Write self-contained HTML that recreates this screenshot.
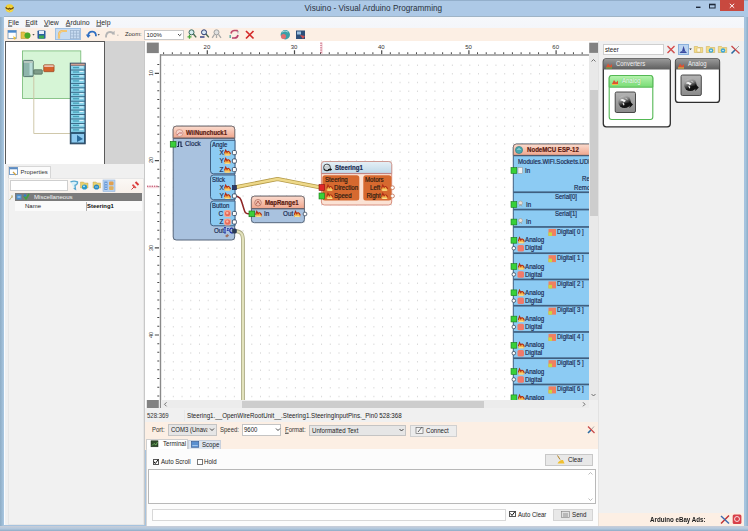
<!DOCTYPE html><html><head><meta charset="utf-8"><style>
*{box-sizing:border-box;margin:0;padding:0}
html,body{width:748px;height:531px;overflow:hidden;background:#a6c3df;font-family:"Liberation Sans",sans-serif;font-size:6.2px;color:#1a1a1a;line-height:1}
.a{position:absolute}
.t{position:absolute;white-space:nowrap;line-height:1}
.cv .t{-webkit-text-stroke:0.18px currentColor}
.b{font-weight:bold}
svg{position:absolute;left:0;top:0;overflow:visible}
u{text-decoration-thickness:0.5px;text-underline-offset:0.8px}
</style></head><body><div id="wrap" style="position:absolute;left:0;top:0;width:748px;height:531px;overflow:hidden;filter:blur(0.35px)">
<div class="a" style="left:0px;top:0px;width:748px;height:17px;background:#adc9e6;border-top:1px solid #93afcb"></div>
<div class="a" style="left:0px;top:17px;width:3.5px;height:514px;background:linear-gradient(90deg,#8eadc6,#aac8e2)"></div>
<div class="a" style="left:744.5px;top:17px;width:3.5px;height:514px;background:linear-gradient(90deg,#aac8e2,#8eadc6)"></div>
<div class="t" style="left:304.5px;top:9px;transform:translateY(-50%);font-size:8.2px;color:#2a3340">Visuino - Visual Arduino Programming</div>
<svg width="748" height="17"><circle cx="9.6" cy="8.3" r="4.1" fill="#f2d030"/><ellipse cx="9.6" cy="9.5" rx="3.2" ry="2.2" fill="#f8e060" opacity="0.6"/><path d="M5.8 7 q1 3 3.8 1.2 q2.8 1.8 3.8 -1.2" stroke="#6a4a10" stroke-width="1.1" fill="none"/><path d="M7.5 8.5 l2.1 1.5 l2.1 -1.5" stroke="#6a4a10" stroke-width="0.8" fill="none"/></svg>
<div class="a" style="left:720px;top:0px;width:24px;height:11px;background:#c8493f"></div>
<svg width="748" height="17"><path d="M729.8 3.8 L734.2 7.8 M734.2 3.8 L729.8 7.8" stroke="#fff" stroke-width="1"/><rect x="696" y="6.6" width="4.5" height="1.4" fill="#1e2a3a"/><rect x="709.5" y="4.2" width="5.6" height="3.8" fill="none" stroke="#1e2a3a" stroke-width="1"/><rect x="709.5" y="4" width="5.6" height="1.3" fill="#1e2a3a"/></svg>
<div class="a" style="left:4px;top:15.6px;width:740px;height:0.9px;background:#9fb4c6"></div>
<div class="a" style="left:4px;top:16.5px;width:740px;height:11.5px;background:linear-gradient(#f6f8fb,#f4f6fa)"></div>
<div class="t" style="left:8px;top:22.9px;transform:translateY(-50%);font-size:6.9px;color:#2a2a2a"><u>F</u>ile</div>
<div class="t" style="left:25.5px;top:22.9px;transform:translateY(-50%);font-size:6.9px;color:#2a2a2a"><u>E</u>dit</div>
<div class="t" style="left:44px;top:22.9px;transform:translateY(-50%);font-size:6.9px;color:#2a2a2a"><u>V</u>iew</div>
<div class="t" style="left:65.8px;top:22.9px;transform:translateY(-50%);font-size:6.9px;color:#2a2a2a"><u>A</u>rduino</div>
<div class="t" style="left:96.3px;top:22.9px;transform:translateY(-50%);font-size:6.9px;color:#2a2a2a"><u>H</u>elp</div>
<div class="a" style="left:4px;top:28px;width:740px;height:13px;background:#fcefe4"></div>
<div class="a" style="left:55.4px;top:28.3px;width:26px;height:11.3px;background:#c7dbf1;border:1px solid #9fc0e4"></div>
<div class="a" style="left:144.2px;top:29.6px;width:39.5px;height:10.6px;background:#fff;border:1px solid #c9c9c9"></div>
<div class="t" style="left:125px;top:35px;transform:translateY(-50%);font-size:5.9px;color:#333">Zoom:</div>
<div class="t" style="left:146.5px;top:35px;transform:translateY(-50%);font-size:6px;color:#222">100%</div>
<svg width="748" height="60">
<!-- new -->
<rect x="8" y="30.5" width="8.2" height="8" fill="#fff" stroke="#6f8fb0" stroke-width="0.8"/>
<rect x="8" y="30.5" width="8.2" height="2.2" fill="#4a8ad0"/>
<path d="M13.5 35.5 l1 1.5 l1.8 0.2 l-1.3 1.2 l0.4 1.6 l-1.9 -0.9 z" fill="#f0c030"/>
<!-- open -->
<path d="M21 32 h3.5 l1 1 h3 v5.5 h-7.5 z" fill="#e3c24a" stroke="#b09020" stroke-width="0.5"/>
<circle cx="27.5" cy="35.5" r="3" fill="#4aa82a"/>
<path d="M32.4 34.3 h2.2 l-1.1 1.3 z" fill="#222"/>
<!-- save -->
<rect x="37.5" y="30.5" width="8" height="8.3" rx="0.8" fill="#2d5f9e"/>
<rect x="39" y="31" width="5" height="3" fill="#e8eef8"/>
<rect x="39" y="35.5" width="5" height="3" fill="#3eaa52"/>
<!-- toggle icons -->
<path d="M59 38.5 v-3.5 q0 -4 4 -4 h4" stroke="#eeb860" stroke-width="2.2" fill="none"/>
<path d="M59 38.5 v-3.5 q0 -4 4 -4 h4" stroke="#f7d890" stroke-width="0.8" fill="none"/>
<g stroke="#98b0cc" stroke-width="0.7" fill="none"><rect x="70.5" y="30.5" width="9" height="8.2"/><path d="M73.5 30.5 v8.2 M76.5 30.5 v8.2 M70.5 33.2 h9 M70.5 36 h9"/></g>
<!-- undo -->
<path d="M88 36.5 q0 -5 4.5 -4.8 q3.5 0.3 3.5 4.5" stroke="#2f6fc2" stroke-width="1.8" fill="none"/>
<path d="M85.8 34.5 l2.4 3.5 l2.4 -3 z" fill="#2f6fc2"/>
<path d="M97.6 34.3 h2.2 l-1.1 1.3 z" fill="#222"/>
<!-- redo -->
<path d="M106 37.5 q0 -5.5 4 -5.5 q3 0 3.5 2.5" stroke="#b5b5b5" stroke-width="1.8" fill="none"/>
<path d="M112 33 l2.6 -2.2 v4.2 z" fill="#b5b5b5"/>
<rect x="117" y="34.8" width="1.6" height="0.6" fill="#999"/>
<!-- combo chevron -->
<path d="M178 34 l1.7 1.7 l1.7 -1.7" stroke="#333" stroke-width="0.9" fill="none"/>
<!-- zoom in -->
<path d="M193.2 33.8 l3 3.6" stroke="#4a6a50" stroke-width="1.4"/>
<circle cx="191.5" cy="32.3" r="2.5" fill="#d8ecf0" stroke="#3a6a60" stroke-width="1"/>
<path d="M187.5 36.8 h4 M189.5 34.8 v4" stroke="#48a838" stroke-width="1.3"/>
<!-- zoom out -->
<path d="M205.8 33.8 l3 3.6" stroke="#4a6a50" stroke-width="1.4"/>
<circle cx="204" cy="32.3" r="2.5" fill="#d8e8f4" stroke="#2a3a70" stroke-width="1"/>
<path d="M200 37 h4.5" stroke="#2a3a80" stroke-width="1.4"/>
<!-- zoom reset -->
<circle cx="216.5" cy="32.3" r="2.5" fill="#e0e0e0" stroke="#a0a0a0" stroke-width="1"/>
<path d="M214.5 34.3 l-2.3 3.5 M218.5 34.3 l2.5 3.5 M216.5 35 v3" stroke="#a8a8a8" stroke-width="1.3"/>
<!-- refresh -->
<path d="M231 33.5 q0.5 -3 3.5 -3 h2.5 l1 1.5" stroke="#c04a6a" stroke-width="1.6" fill="none"/>
<path d="M238 35 q-0.5 3 -3.5 3 h-2.5" stroke="#b8406a" stroke-width="1.6" fill="none"/>
<path d="M230.2 35 v3" stroke="#58a8a0" stroke-width="1.4"/>
<path d="M238 31 v2.5" stroke="#a8c8c8" stroke-width="1"/>
<!-- red x -->
<path d="M246 31 l7.5 7.5 M253.5 31 l-7.5 7.5" stroke="#d42a2a" stroke-width="1.7"/>
<!-- teal -->
<circle cx="285.3" cy="34.8" r="4.7" fill="#3aa0a8"/>
<circle cx="283.5" cy="36.5" r="2.5" fill="#e07070"/>
<path d="M282 32 q3 -2 6 0" stroke="#b8e0e8" stroke-width="0.8" fill="none"/>
<!-- dark blue -->
<rect x="296" y="30.5" width="9" height="8.5" fill="#2d4f78"/>
<rect x="297" y="31.5" width="4" height="3" fill="#9ac0e0"/>
<path d="M300 35 l3 4 l2 -3" fill="#d05050"/>
</svg>
<div class="a" style="left:4px;top:41px;width:140px;height:484px;background:#f0f0f0"></div>
<div class="a" style="left:4.5px;top:41px;width:100.5px;height:123px;background:#fff;border:1px solid #5a5a5a;border-bottom:none"></div>
<div class="a" style="left:105px;top:41px;width:39.5px;height:123px;background:#d3d3d3"></div>
<div class="a" style="left:143.5px;top:41px;width:1px;height:484px;background:#c8c8c8"></div>
<svg width="748" height="200">
<rect x="22.5" y="50.9" width="58.3" height="47.5" fill="#d6f5d6" stroke="#72b872" stroke-width="0.8"/>
<path d="M33.8 76 V133.5 H70.5" stroke="#cbc2a2" stroke-width="0.9" fill="none"/>
<rect x="23.3" y="60.4" width="9.9" height="16.2" rx="1" fill="#8fb5ac" stroke="#3f5f5c" stroke-width="0.8"/>
<rect x="29.5" y="62" width="3" height="13" fill="#b8dcd8"/>
<rect x="23.8" y="61" width="9" height="2" fill="#b8c8c0"/>
<rect x="33.8" y="69.7" width="8.5" height="4.5" rx="0.8" fill="#7e9c8a" stroke="#3f5a4a" stroke-width="0.6"/>
<rect x="43.7" y="64.8" width="10.4" height="6.9" rx="0.8" fill="#d4622c" stroke="#8a3a1a" stroke-width="0.6"/>
<rect x="44.2" y="65.2" width="9.4" height="1.8" fill="#e8c0b0"/>
<rect x="70.3" y="63.2" width="14.9" height="80.6" fill="#2f5a78" stroke="#27445e" stroke-width="1"/>
<rect x="70.8" y="63.6" width="14" height="2" fill="#d0a090"/>
<rect x="71" y="66.00" width="13.5" height="3.6" fill="#86d2ea"/><rect x="73" y="67.00" width="6" height="1.2" fill="#2a8aa0" opacity="0.7"/><rect x="79.5" y="66.50" width="4" height="1" fill="#e8f8ff"/><rect x="71" y="70.45" width="13.5" height="3.6" fill="#86d2ea"/><rect x="73" y="71.45" width="6" height="1.2" fill="#2a8aa0" opacity="0.7"/><rect x="79.5" y="70.95" width="4" height="1" fill="#e8f8ff"/><rect x="71" y="74.90" width="13.5" height="3.6" fill="#86d2ea"/><rect x="73" y="75.90" width="6" height="1.2" fill="#2a8aa0" opacity="0.7"/><rect x="79.5" y="75.40" width="4" height="1" fill="#e8f8ff"/><rect x="71" y="79.35" width="13.5" height="3.6" fill="#86d2ea"/><rect x="73" y="80.35" width="6" height="1.2" fill="#2a8aa0" opacity="0.7"/><rect x="79.5" y="79.85" width="4" height="1" fill="#e8f8ff"/><rect x="71" y="83.80" width="13.5" height="3.6" fill="#86d2ea"/><rect x="73" y="84.80" width="6" height="1.2" fill="#2a8aa0" opacity="0.7"/><rect x="79.5" y="84.30" width="4" height="1" fill="#e8f8ff"/><rect x="71" y="88.25" width="13.5" height="3.6" fill="#86d2ea"/><rect x="73" y="89.25" width="6" height="1.2" fill="#2a8aa0" opacity="0.7"/><rect x="79.5" y="88.75" width="4" height="1" fill="#e8f8ff"/><rect x="71" y="92.70" width="13.5" height="3.6" fill="#86d2ea"/><rect x="73" y="93.70" width="6" height="1.2" fill="#2a8aa0" opacity="0.7"/><rect x="79.5" y="93.20" width="4" height="1" fill="#e8f8ff"/><rect x="71" y="97.15" width="13.5" height="3.6" fill="#86d2ea"/><rect x="73" y="98.15" width="6" height="1.2" fill="#2a8aa0" opacity="0.7"/><rect x="79.5" y="97.65" width="4" height="1" fill="#e8f8ff"/><rect x="71" y="101.60" width="13.5" height="3.6" fill="#86d2ea"/><rect x="73" y="102.60" width="6" height="1.2" fill="#2a8aa0" opacity="0.7"/><rect x="79.5" y="102.10" width="4" height="1" fill="#e8f8ff"/><rect x="71" y="106.05" width="13.5" height="3.6" fill="#86d2ea"/><rect x="73" y="107.05" width="6" height="1.2" fill="#2a8aa0" opacity="0.7"/><rect x="79.5" y="106.55" width="4" height="1" fill="#e8f8ff"/><rect x="71" y="110.50" width="13.5" height="3.6" fill="#86d2ea"/><rect x="73" y="111.50" width="6" height="1.2" fill="#2a8aa0" opacity="0.7"/><rect x="79.5" y="111.00" width="4" height="1" fill="#e8f8ff"/><rect x="71" y="114.95" width="13.5" height="3.6" fill="#86d2ea"/><rect x="73" y="115.95" width="6" height="1.2" fill="#2a8aa0" opacity="0.7"/><rect x="79.5" y="115.45" width="4" height="1" fill="#e8f8ff"/><rect x="71" y="119.40" width="13.5" height="3.6" fill="#86d2ea"/><rect x="73" y="120.40" width="6" height="1.2" fill="#2a8aa0" opacity="0.7"/><rect x="79.5" y="119.90" width="4" height="1" fill="#e8f8ff"/><rect x="71" y="123.85" width="13.5" height="3.6" fill="#86d2ea"/><rect x="73" y="124.85" width="6" height="1.2" fill="#2a8aa0" opacity="0.7"/><rect x="79.5" y="124.35" width="4" height="1" fill="#e8f8ff"/><rect x="71" y="128.30" width="13.5" height="3.6" fill="#86d2ea"/><rect x="73" y="129.30" width="6" height="1.2" fill="#2a8aa0" opacity="0.7"/><rect x="79.5" y="128.80" width="4" height="1" fill="#e8f8ff"/>
<rect x="71.5" y="134" width="12.5" height="8.5" fill="#8ccaf0"/>
<path d="M77 135 l6 4 l-6 3 z" fill="#2a6a9a"/>
</svg>
<div class="a" style="left:4px;top:41px;width:1.2px;height:484px;background:#fafcff"></div>
<div class="a" style="left:7.5px;top:177.5px;width:136px;height:347px;background:#f1f1f1;border:1px solid #e6e6e6"></div>
<div class="a" style="left:8px;top:166px;width:43px;height:12px;background:#fbfbfb;border:1px solid #d6d6d6;border-bottom:none"></div>
<div class="t" style="left:20.5px;top:172px;transform:translateY(-50%);font-size:6px;color:#333">Properties</div>
<div class="a" style="left:8.5px;top:178.5px;width:134.5px;height:14px;background:linear-gradient(#fbf8f5,#f7f0ea)"></div>
<div class="a" style="left:9.6px;top:180px;width:58px;height:11px;background:#fff;border:1px solid #cfcfcf"></div>
<div class="a" style="left:15px;top:193px;width:127px;height:8.2px;background:#7b7b7b"></div>
<div class="t" style="left:34px;top:197.2px;transform:translateY(-50%);font-size:6.1px;color:#f4f4f4">Miscellaneous</div>
<div class="a" style="left:15px;top:201.2px;width:127px;height:9.5px;background:#fafafa"></div>
<div class="a" style="left:85.5px;top:201.5px;width:0.8px;height:9px;background:#b0b0b0"></div>
<div class="t" style="left:25px;top:206px;transform:translateY(-50%);font-size:6px;color:#222">Name</div>
<div class="t" style="left:87px;top:207px;transform:translateY(-50%);font-size:5.9px;color:#111;font-weight:bold">Steering1</div>
<svg width="748" height="220">
<rect x="9.5" y="167.5" width="8" height="7" fill="#fff" stroke="#5a8ac0" stroke-width="0.8"/>
<rect x="9.5" y="167.5" width="8" height="1.8" fill="#5a8ac0"/>
<path d="M13 172 l3 3" stroke="#d0a040" stroke-width="1.2"/>
<path d="M70.5 181.8 q3.5 -1.5 7 0 q0.5 2.5 -2.5 3.5 l0.5 4 l-1.8 -1" stroke="#58a8d0" stroke-width="1.3" fill="#d8f0f8"/>
<path d="M80.5 182 h3 l1 1 h3.5 v5 h-7.5 z" fill="#e8d070" stroke="#c0a040" stroke-width="0.4"/><circle cx="84.5" cy="187" r="2.6" fill="#2a98c8"/><circle cx="84" cy="186.3" r="0.9" fill="#c0f0ff"/>
<path d="M93 182 h3 l1 1 h3.5 v5 h-7.5 z" fill="#e8d070" stroke="#c0a040" stroke-width="0.4"/><circle cx="96.5" cy="187" r="2.6" fill="#2a88c0"/><path d="M95 187 h3" stroke="#c0f0ff" stroke-width="0.7"/>
<rect x="103" y="180" width="12" height="11.5" fill="#b8d2f0" stroke="#90b4e0" stroke-width="0.6"/>
<rect x="104.3" y="181.5" width="3.2" height="8.5" fill="#6a9ad8"/><path d="M105 183.5 h2 M105 186 h2 M105 188.5 h2" stroke="#e0f0ff" stroke-width="0.6"/>
<rect x="109" y="181.5" width="4.5" height="3.8" rx="1" fill="#e0a050"/><rect x="109" y="186.3" width="4.5" height="3.8" rx="1" fill="#e0b060"/>
<path d="M131.5 189.5 l3 -3" stroke="#c03030" stroke-width="0.9"/><path d="M133 184 l3.5 3.5 l-1.5 1 l-3 -3 z" fill="#e04848"/><path d="M135.5 182 l3 3" stroke="#d83a3a" stroke-width="2"/>
<path d="M9.5 200 l3 -4 M12 195 v3" stroke="#c0b070" stroke-width="0.9"/>
<rect x="16.5" y="194.5" width="5" height="5" fill="#4a90d0"/><path d="M17.5 197 h3" stroke="#fff" stroke-width="0.7"/>
<path d="M24 196 l2 3 l3 -5" stroke="#40a040" stroke-width="1.6" fill="none"/><circle cx="25" cy="195.5" r="1.3" fill="#3080c0"/>
</svg>
<div class="a" style="left:144.5px;top:41px;width:454px;height:367px;background:#fff"></div>
<svg width="748" height="531"><path d="M164.10 64.40h1v1.5h-1zM164.10 73.12h1v1.5h-1zM164.10 81.84h1v1.5h-1zM164.10 90.56h1v1.5h-1zM164.10 99.28h1v1.5h-1zM164.10 108.00h1v1.5h-1zM164.10 116.72h1v1.5h-1zM164.10 125.44h1v1.5h-1zM164.10 134.16h1v1.5h-1zM164.10 142.88h1v1.5h-1zM164.10 151.60h1v1.5h-1zM164.10 160.32h1v1.5h-1zM164.10 169.04h1v1.5h-1zM164.10 177.76h1v1.5h-1zM164.10 186.48h1v1.5h-1zM164.10 195.20h1v1.5h-1zM164.10 203.92h1v1.5h-1zM164.10 212.64h1v1.5h-1zM164.10 221.36h1v1.5h-1zM164.10 230.08h1v1.5h-1zM164.10 238.80h1v1.5h-1zM164.10 247.52h1v1.5h-1zM164.10 256.24h1v1.5h-1zM164.10 264.96h1v1.5h-1zM164.10 273.68h1v1.5h-1zM164.10 282.40h1v1.5h-1zM164.10 291.12h1v1.5h-1zM164.10 299.84h1v1.5h-1zM164.10 308.56h1v1.5h-1zM164.10 317.28h1v1.5h-1zM164.10 326.00h1v1.5h-1zM164.10 334.72h1v1.5h-1zM164.10 343.44h1v1.5h-1zM164.10 352.16h1v1.5h-1zM164.10 360.88h1v1.5h-1zM164.10 369.60h1v1.5h-1zM164.10 378.32h1v1.5h-1zM164.10 387.04h1v1.5h-1zM164.10 395.76h1v1.5h-1zM172.82 64.40h1v1.5h-1zM172.82 73.12h1v1.5h-1zM172.82 81.84h1v1.5h-1zM172.82 90.56h1v1.5h-1zM172.82 99.28h1v1.5h-1zM172.82 108.00h1v1.5h-1zM172.82 116.72h1v1.5h-1zM172.82 125.44h1v1.5h-1zM172.82 134.16h1v1.5h-1zM172.82 142.88h1v1.5h-1zM172.82 151.60h1v1.5h-1zM172.82 160.32h1v1.5h-1zM172.82 169.04h1v1.5h-1zM172.82 177.76h1v1.5h-1zM172.82 186.48h1v1.5h-1zM172.82 195.20h1v1.5h-1zM172.82 203.92h1v1.5h-1zM172.82 212.64h1v1.5h-1zM172.82 221.36h1v1.5h-1zM172.82 230.08h1v1.5h-1zM172.82 238.80h1v1.5h-1zM172.82 247.52h1v1.5h-1zM172.82 256.24h1v1.5h-1zM172.82 264.96h1v1.5h-1zM172.82 273.68h1v1.5h-1zM172.82 282.40h1v1.5h-1zM172.82 291.12h1v1.5h-1zM172.82 299.84h1v1.5h-1zM172.82 308.56h1v1.5h-1zM172.82 317.28h1v1.5h-1zM172.82 326.00h1v1.5h-1zM172.82 334.72h1v1.5h-1zM172.82 343.44h1v1.5h-1zM172.82 352.16h1v1.5h-1zM172.82 360.88h1v1.5h-1zM172.82 369.60h1v1.5h-1zM172.82 378.32h1v1.5h-1zM172.82 387.04h1v1.5h-1zM172.82 395.76h1v1.5h-1zM181.54 64.40h1v1.5h-1zM181.54 73.12h1v1.5h-1zM181.54 81.84h1v1.5h-1zM181.54 90.56h1v1.5h-1zM181.54 99.28h1v1.5h-1zM181.54 108.00h1v1.5h-1zM181.54 116.72h1v1.5h-1zM181.54 125.44h1v1.5h-1zM181.54 134.16h1v1.5h-1zM181.54 142.88h1v1.5h-1zM181.54 151.60h1v1.5h-1zM181.54 160.32h1v1.5h-1zM181.54 169.04h1v1.5h-1zM181.54 177.76h1v1.5h-1zM181.54 186.48h1v1.5h-1zM181.54 195.20h1v1.5h-1zM181.54 203.92h1v1.5h-1zM181.54 212.64h1v1.5h-1zM181.54 221.36h1v1.5h-1zM181.54 230.08h1v1.5h-1zM181.54 238.80h1v1.5h-1zM181.54 247.52h1v1.5h-1zM181.54 256.24h1v1.5h-1zM181.54 264.96h1v1.5h-1zM181.54 273.68h1v1.5h-1zM181.54 282.40h1v1.5h-1zM181.54 291.12h1v1.5h-1zM181.54 299.84h1v1.5h-1zM181.54 308.56h1v1.5h-1zM181.54 317.28h1v1.5h-1zM181.54 326.00h1v1.5h-1zM181.54 334.72h1v1.5h-1zM181.54 343.44h1v1.5h-1zM181.54 352.16h1v1.5h-1zM181.54 360.88h1v1.5h-1zM181.54 369.60h1v1.5h-1zM181.54 378.32h1v1.5h-1zM181.54 387.04h1v1.5h-1zM181.54 395.76h1v1.5h-1zM190.26 64.40h1v1.5h-1zM190.26 73.12h1v1.5h-1zM190.26 81.84h1v1.5h-1zM190.26 90.56h1v1.5h-1zM190.26 99.28h1v1.5h-1zM190.26 108.00h1v1.5h-1zM190.26 116.72h1v1.5h-1zM190.26 125.44h1v1.5h-1zM190.26 134.16h1v1.5h-1zM190.26 142.88h1v1.5h-1zM190.26 151.60h1v1.5h-1zM190.26 160.32h1v1.5h-1zM190.26 169.04h1v1.5h-1zM190.26 177.76h1v1.5h-1zM190.26 186.48h1v1.5h-1zM190.26 195.20h1v1.5h-1zM190.26 203.92h1v1.5h-1zM190.26 212.64h1v1.5h-1zM190.26 221.36h1v1.5h-1zM190.26 230.08h1v1.5h-1zM190.26 238.80h1v1.5h-1zM190.26 247.52h1v1.5h-1zM190.26 256.24h1v1.5h-1zM190.26 264.96h1v1.5h-1zM190.26 273.68h1v1.5h-1zM190.26 282.40h1v1.5h-1zM190.26 291.12h1v1.5h-1zM190.26 299.84h1v1.5h-1zM190.26 308.56h1v1.5h-1zM190.26 317.28h1v1.5h-1zM190.26 326.00h1v1.5h-1zM190.26 334.72h1v1.5h-1zM190.26 343.44h1v1.5h-1zM190.26 352.16h1v1.5h-1zM190.26 360.88h1v1.5h-1zM190.26 369.60h1v1.5h-1zM190.26 378.32h1v1.5h-1zM190.26 387.04h1v1.5h-1zM190.26 395.76h1v1.5h-1zM198.98 64.40h1v1.5h-1zM198.98 73.12h1v1.5h-1zM198.98 81.84h1v1.5h-1zM198.98 90.56h1v1.5h-1zM198.98 99.28h1v1.5h-1zM198.98 108.00h1v1.5h-1zM198.98 116.72h1v1.5h-1zM198.98 125.44h1v1.5h-1zM198.98 134.16h1v1.5h-1zM198.98 142.88h1v1.5h-1zM198.98 151.60h1v1.5h-1zM198.98 160.32h1v1.5h-1zM198.98 169.04h1v1.5h-1zM198.98 177.76h1v1.5h-1zM198.98 186.48h1v1.5h-1zM198.98 195.20h1v1.5h-1zM198.98 203.92h1v1.5h-1zM198.98 212.64h1v1.5h-1zM198.98 221.36h1v1.5h-1zM198.98 230.08h1v1.5h-1zM198.98 238.80h1v1.5h-1zM198.98 247.52h1v1.5h-1zM198.98 256.24h1v1.5h-1zM198.98 264.96h1v1.5h-1zM198.98 273.68h1v1.5h-1zM198.98 282.40h1v1.5h-1zM198.98 291.12h1v1.5h-1zM198.98 299.84h1v1.5h-1zM198.98 308.56h1v1.5h-1zM198.98 317.28h1v1.5h-1zM198.98 326.00h1v1.5h-1zM198.98 334.72h1v1.5h-1zM198.98 343.44h1v1.5h-1zM198.98 352.16h1v1.5h-1zM198.98 360.88h1v1.5h-1zM198.98 369.60h1v1.5h-1zM198.98 378.32h1v1.5h-1zM198.98 387.04h1v1.5h-1zM198.98 395.76h1v1.5h-1zM207.70 64.40h1v1.5h-1zM207.70 73.12h1v1.5h-1zM207.70 81.84h1v1.5h-1zM207.70 90.56h1v1.5h-1zM207.70 99.28h1v1.5h-1zM207.70 108.00h1v1.5h-1zM207.70 116.72h1v1.5h-1zM207.70 125.44h1v1.5h-1zM207.70 134.16h1v1.5h-1zM207.70 142.88h1v1.5h-1zM207.70 151.60h1v1.5h-1zM207.70 160.32h1v1.5h-1zM207.70 169.04h1v1.5h-1zM207.70 177.76h1v1.5h-1zM207.70 186.48h1v1.5h-1zM207.70 195.20h1v1.5h-1zM207.70 203.92h1v1.5h-1zM207.70 212.64h1v1.5h-1zM207.70 221.36h1v1.5h-1zM207.70 230.08h1v1.5h-1zM207.70 238.80h1v1.5h-1zM207.70 247.52h1v1.5h-1zM207.70 256.24h1v1.5h-1zM207.70 264.96h1v1.5h-1zM207.70 273.68h1v1.5h-1zM207.70 282.40h1v1.5h-1zM207.70 291.12h1v1.5h-1zM207.70 299.84h1v1.5h-1zM207.70 308.56h1v1.5h-1zM207.70 317.28h1v1.5h-1zM207.70 326.00h1v1.5h-1zM207.70 334.72h1v1.5h-1zM207.70 343.44h1v1.5h-1zM207.70 352.16h1v1.5h-1zM207.70 360.88h1v1.5h-1zM207.70 369.60h1v1.5h-1zM207.70 378.32h1v1.5h-1zM207.70 387.04h1v1.5h-1zM207.70 395.76h1v1.5h-1zM216.42 64.40h1v1.5h-1zM216.42 73.12h1v1.5h-1zM216.42 81.84h1v1.5h-1zM216.42 90.56h1v1.5h-1zM216.42 99.28h1v1.5h-1zM216.42 108.00h1v1.5h-1zM216.42 116.72h1v1.5h-1zM216.42 125.44h1v1.5h-1zM216.42 134.16h1v1.5h-1zM216.42 142.88h1v1.5h-1zM216.42 151.60h1v1.5h-1zM216.42 160.32h1v1.5h-1zM216.42 169.04h1v1.5h-1zM216.42 177.76h1v1.5h-1zM216.42 186.48h1v1.5h-1zM216.42 195.20h1v1.5h-1zM216.42 203.92h1v1.5h-1zM216.42 212.64h1v1.5h-1zM216.42 221.36h1v1.5h-1zM216.42 230.08h1v1.5h-1zM216.42 238.80h1v1.5h-1zM216.42 247.52h1v1.5h-1zM216.42 256.24h1v1.5h-1zM216.42 264.96h1v1.5h-1zM216.42 273.68h1v1.5h-1zM216.42 282.40h1v1.5h-1zM216.42 291.12h1v1.5h-1zM216.42 299.84h1v1.5h-1zM216.42 308.56h1v1.5h-1zM216.42 317.28h1v1.5h-1zM216.42 326.00h1v1.5h-1zM216.42 334.72h1v1.5h-1zM216.42 343.44h1v1.5h-1zM216.42 352.16h1v1.5h-1zM216.42 360.88h1v1.5h-1zM216.42 369.60h1v1.5h-1zM216.42 378.32h1v1.5h-1zM216.42 387.04h1v1.5h-1zM216.42 395.76h1v1.5h-1zM225.14 64.40h1v1.5h-1zM225.14 73.12h1v1.5h-1zM225.14 81.84h1v1.5h-1zM225.14 90.56h1v1.5h-1zM225.14 99.28h1v1.5h-1zM225.14 108.00h1v1.5h-1zM225.14 116.72h1v1.5h-1zM225.14 125.44h1v1.5h-1zM225.14 134.16h1v1.5h-1zM225.14 142.88h1v1.5h-1zM225.14 151.60h1v1.5h-1zM225.14 160.32h1v1.5h-1zM225.14 169.04h1v1.5h-1zM225.14 177.76h1v1.5h-1zM225.14 186.48h1v1.5h-1zM225.14 195.20h1v1.5h-1zM225.14 203.92h1v1.5h-1zM225.14 212.64h1v1.5h-1zM225.14 221.36h1v1.5h-1zM225.14 230.08h1v1.5h-1zM225.14 238.80h1v1.5h-1zM225.14 247.52h1v1.5h-1zM225.14 256.24h1v1.5h-1zM225.14 264.96h1v1.5h-1zM225.14 273.68h1v1.5h-1zM225.14 282.40h1v1.5h-1zM225.14 291.12h1v1.5h-1zM225.14 299.84h1v1.5h-1zM225.14 308.56h1v1.5h-1zM225.14 317.28h1v1.5h-1zM225.14 326.00h1v1.5h-1zM225.14 334.72h1v1.5h-1zM225.14 343.44h1v1.5h-1zM225.14 352.16h1v1.5h-1zM225.14 360.88h1v1.5h-1zM225.14 369.60h1v1.5h-1zM225.14 378.32h1v1.5h-1zM225.14 387.04h1v1.5h-1zM225.14 395.76h1v1.5h-1zM233.86 64.40h1v1.5h-1zM233.86 73.12h1v1.5h-1zM233.86 81.84h1v1.5h-1zM233.86 90.56h1v1.5h-1zM233.86 99.28h1v1.5h-1zM233.86 108.00h1v1.5h-1zM233.86 116.72h1v1.5h-1zM233.86 125.44h1v1.5h-1zM233.86 134.16h1v1.5h-1zM233.86 142.88h1v1.5h-1zM233.86 151.60h1v1.5h-1zM233.86 160.32h1v1.5h-1zM233.86 169.04h1v1.5h-1zM233.86 177.76h1v1.5h-1zM233.86 186.48h1v1.5h-1zM233.86 195.20h1v1.5h-1zM233.86 203.92h1v1.5h-1zM233.86 212.64h1v1.5h-1zM233.86 221.36h1v1.5h-1zM233.86 230.08h1v1.5h-1zM233.86 238.80h1v1.5h-1zM233.86 247.52h1v1.5h-1zM233.86 256.24h1v1.5h-1zM233.86 264.96h1v1.5h-1zM233.86 273.68h1v1.5h-1zM233.86 282.40h1v1.5h-1zM233.86 291.12h1v1.5h-1zM233.86 299.84h1v1.5h-1zM233.86 308.56h1v1.5h-1zM233.86 317.28h1v1.5h-1zM233.86 326.00h1v1.5h-1zM233.86 334.72h1v1.5h-1zM233.86 343.44h1v1.5h-1zM233.86 352.16h1v1.5h-1zM233.86 360.88h1v1.5h-1zM233.86 369.60h1v1.5h-1zM233.86 378.32h1v1.5h-1zM233.86 387.04h1v1.5h-1zM233.86 395.76h1v1.5h-1zM242.58 64.40h1v1.5h-1zM242.58 73.12h1v1.5h-1zM242.58 81.84h1v1.5h-1zM242.58 90.56h1v1.5h-1zM242.58 99.28h1v1.5h-1zM242.58 108.00h1v1.5h-1zM242.58 116.72h1v1.5h-1zM242.58 125.44h1v1.5h-1zM242.58 134.16h1v1.5h-1zM242.58 142.88h1v1.5h-1zM242.58 151.60h1v1.5h-1zM242.58 160.32h1v1.5h-1zM242.58 169.04h1v1.5h-1zM242.58 177.76h1v1.5h-1zM242.58 186.48h1v1.5h-1zM242.58 195.20h1v1.5h-1zM242.58 203.92h1v1.5h-1zM242.58 212.64h1v1.5h-1zM242.58 221.36h1v1.5h-1zM242.58 230.08h1v1.5h-1zM242.58 238.80h1v1.5h-1zM242.58 247.52h1v1.5h-1zM242.58 256.24h1v1.5h-1zM242.58 264.96h1v1.5h-1zM242.58 273.68h1v1.5h-1zM242.58 282.40h1v1.5h-1zM242.58 291.12h1v1.5h-1zM242.58 299.84h1v1.5h-1zM242.58 308.56h1v1.5h-1zM242.58 317.28h1v1.5h-1zM242.58 326.00h1v1.5h-1zM242.58 334.72h1v1.5h-1zM242.58 343.44h1v1.5h-1zM242.58 352.16h1v1.5h-1zM242.58 360.88h1v1.5h-1zM242.58 369.60h1v1.5h-1zM242.58 378.32h1v1.5h-1zM242.58 387.04h1v1.5h-1zM242.58 395.76h1v1.5h-1zM251.30 64.40h1v1.5h-1zM251.30 73.12h1v1.5h-1zM251.30 81.84h1v1.5h-1zM251.30 90.56h1v1.5h-1zM251.30 99.28h1v1.5h-1zM251.30 108.00h1v1.5h-1zM251.30 116.72h1v1.5h-1zM251.30 125.44h1v1.5h-1zM251.30 134.16h1v1.5h-1zM251.30 142.88h1v1.5h-1zM251.30 151.60h1v1.5h-1zM251.30 160.32h1v1.5h-1zM251.30 169.04h1v1.5h-1zM251.30 177.76h1v1.5h-1zM251.30 186.48h1v1.5h-1zM251.30 195.20h1v1.5h-1zM251.30 203.92h1v1.5h-1zM251.30 212.64h1v1.5h-1zM251.30 221.36h1v1.5h-1zM251.30 230.08h1v1.5h-1zM251.30 238.80h1v1.5h-1zM251.30 247.52h1v1.5h-1zM251.30 256.24h1v1.5h-1zM251.30 264.96h1v1.5h-1zM251.30 273.68h1v1.5h-1zM251.30 282.40h1v1.5h-1zM251.30 291.12h1v1.5h-1zM251.30 299.84h1v1.5h-1zM251.30 308.56h1v1.5h-1zM251.30 317.28h1v1.5h-1zM251.30 326.00h1v1.5h-1zM251.30 334.72h1v1.5h-1zM251.30 343.44h1v1.5h-1zM251.30 352.16h1v1.5h-1zM251.30 360.88h1v1.5h-1zM251.30 369.60h1v1.5h-1zM251.30 378.32h1v1.5h-1zM251.30 387.04h1v1.5h-1zM251.30 395.76h1v1.5h-1zM260.02 64.40h1v1.5h-1zM260.02 73.12h1v1.5h-1zM260.02 81.84h1v1.5h-1zM260.02 90.56h1v1.5h-1zM260.02 99.28h1v1.5h-1zM260.02 108.00h1v1.5h-1zM260.02 116.72h1v1.5h-1zM260.02 125.44h1v1.5h-1zM260.02 134.16h1v1.5h-1zM260.02 142.88h1v1.5h-1zM260.02 151.60h1v1.5h-1zM260.02 160.32h1v1.5h-1zM260.02 169.04h1v1.5h-1zM260.02 177.76h1v1.5h-1zM260.02 186.48h1v1.5h-1zM260.02 195.20h1v1.5h-1zM260.02 203.92h1v1.5h-1zM260.02 212.64h1v1.5h-1zM260.02 221.36h1v1.5h-1zM260.02 230.08h1v1.5h-1zM260.02 238.80h1v1.5h-1zM260.02 247.52h1v1.5h-1zM260.02 256.24h1v1.5h-1zM260.02 264.96h1v1.5h-1zM260.02 273.68h1v1.5h-1zM260.02 282.40h1v1.5h-1zM260.02 291.12h1v1.5h-1zM260.02 299.84h1v1.5h-1zM260.02 308.56h1v1.5h-1zM260.02 317.28h1v1.5h-1zM260.02 326.00h1v1.5h-1zM260.02 334.72h1v1.5h-1zM260.02 343.44h1v1.5h-1zM260.02 352.16h1v1.5h-1zM260.02 360.88h1v1.5h-1zM260.02 369.60h1v1.5h-1zM260.02 378.32h1v1.5h-1zM260.02 387.04h1v1.5h-1zM260.02 395.76h1v1.5h-1zM268.74 64.40h1v1.5h-1zM268.74 73.12h1v1.5h-1zM268.74 81.84h1v1.5h-1zM268.74 90.56h1v1.5h-1zM268.74 99.28h1v1.5h-1zM268.74 108.00h1v1.5h-1zM268.74 116.72h1v1.5h-1zM268.74 125.44h1v1.5h-1zM268.74 134.16h1v1.5h-1zM268.74 142.88h1v1.5h-1zM268.74 151.60h1v1.5h-1zM268.74 160.32h1v1.5h-1zM268.74 169.04h1v1.5h-1zM268.74 177.76h1v1.5h-1zM268.74 186.48h1v1.5h-1zM268.74 195.20h1v1.5h-1zM268.74 203.92h1v1.5h-1zM268.74 212.64h1v1.5h-1zM268.74 221.36h1v1.5h-1zM268.74 230.08h1v1.5h-1zM268.74 238.80h1v1.5h-1zM268.74 247.52h1v1.5h-1zM268.74 256.24h1v1.5h-1zM268.74 264.96h1v1.5h-1zM268.74 273.68h1v1.5h-1zM268.74 282.40h1v1.5h-1zM268.74 291.12h1v1.5h-1zM268.74 299.84h1v1.5h-1zM268.74 308.56h1v1.5h-1zM268.74 317.28h1v1.5h-1zM268.74 326.00h1v1.5h-1zM268.74 334.72h1v1.5h-1zM268.74 343.44h1v1.5h-1zM268.74 352.16h1v1.5h-1zM268.74 360.88h1v1.5h-1zM268.74 369.60h1v1.5h-1zM268.74 378.32h1v1.5h-1zM268.74 387.04h1v1.5h-1zM268.74 395.76h1v1.5h-1zM277.46 64.40h1v1.5h-1zM277.46 73.12h1v1.5h-1zM277.46 81.84h1v1.5h-1zM277.46 90.56h1v1.5h-1zM277.46 99.28h1v1.5h-1zM277.46 108.00h1v1.5h-1zM277.46 116.72h1v1.5h-1zM277.46 125.44h1v1.5h-1zM277.46 134.16h1v1.5h-1zM277.46 142.88h1v1.5h-1zM277.46 151.60h1v1.5h-1zM277.46 160.32h1v1.5h-1zM277.46 169.04h1v1.5h-1zM277.46 177.76h1v1.5h-1zM277.46 186.48h1v1.5h-1zM277.46 195.20h1v1.5h-1zM277.46 203.92h1v1.5h-1zM277.46 212.64h1v1.5h-1zM277.46 221.36h1v1.5h-1zM277.46 230.08h1v1.5h-1zM277.46 238.80h1v1.5h-1zM277.46 247.52h1v1.5h-1zM277.46 256.24h1v1.5h-1zM277.46 264.96h1v1.5h-1zM277.46 273.68h1v1.5h-1zM277.46 282.40h1v1.5h-1zM277.46 291.12h1v1.5h-1zM277.46 299.84h1v1.5h-1zM277.46 308.56h1v1.5h-1zM277.46 317.28h1v1.5h-1zM277.46 326.00h1v1.5h-1zM277.46 334.72h1v1.5h-1zM277.46 343.44h1v1.5h-1zM277.46 352.16h1v1.5h-1zM277.46 360.88h1v1.5h-1zM277.46 369.60h1v1.5h-1zM277.46 378.32h1v1.5h-1zM277.46 387.04h1v1.5h-1zM277.46 395.76h1v1.5h-1zM286.18 64.40h1v1.5h-1zM286.18 73.12h1v1.5h-1zM286.18 81.84h1v1.5h-1zM286.18 90.56h1v1.5h-1zM286.18 99.28h1v1.5h-1zM286.18 108.00h1v1.5h-1zM286.18 116.72h1v1.5h-1zM286.18 125.44h1v1.5h-1zM286.18 134.16h1v1.5h-1zM286.18 142.88h1v1.5h-1zM286.18 151.60h1v1.5h-1zM286.18 160.32h1v1.5h-1zM286.18 169.04h1v1.5h-1zM286.18 177.76h1v1.5h-1zM286.18 186.48h1v1.5h-1zM286.18 195.20h1v1.5h-1zM286.18 203.92h1v1.5h-1zM286.18 212.64h1v1.5h-1zM286.18 221.36h1v1.5h-1zM286.18 230.08h1v1.5h-1zM286.18 238.80h1v1.5h-1zM286.18 247.52h1v1.5h-1zM286.18 256.24h1v1.5h-1zM286.18 264.96h1v1.5h-1zM286.18 273.68h1v1.5h-1zM286.18 282.40h1v1.5h-1zM286.18 291.12h1v1.5h-1zM286.18 299.84h1v1.5h-1zM286.18 308.56h1v1.5h-1zM286.18 317.28h1v1.5h-1zM286.18 326.00h1v1.5h-1zM286.18 334.72h1v1.5h-1zM286.18 343.44h1v1.5h-1zM286.18 352.16h1v1.5h-1zM286.18 360.88h1v1.5h-1zM286.18 369.60h1v1.5h-1zM286.18 378.32h1v1.5h-1zM286.18 387.04h1v1.5h-1zM286.18 395.76h1v1.5h-1zM294.90 64.40h1v1.5h-1zM294.90 73.12h1v1.5h-1zM294.90 81.84h1v1.5h-1zM294.90 90.56h1v1.5h-1zM294.90 99.28h1v1.5h-1zM294.90 108.00h1v1.5h-1zM294.90 116.72h1v1.5h-1zM294.90 125.44h1v1.5h-1zM294.90 134.16h1v1.5h-1zM294.90 142.88h1v1.5h-1zM294.90 151.60h1v1.5h-1zM294.90 160.32h1v1.5h-1zM294.90 169.04h1v1.5h-1zM294.90 177.76h1v1.5h-1zM294.90 186.48h1v1.5h-1zM294.90 195.20h1v1.5h-1zM294.90 203.92h1v1.5h-1zM294.90 212.64h1v1.5h-1zM294.90 221.36h1v1.5h-1zM294.90 230.08h1v1.5h-1zM294.90 238.80h1v1.5h-1zM294.90 247.52h1v1.5h-1zM294.90 256.24h1v1.5h-1zM294.90 264.96h1v1.5h-1zM294.90 273.68h1v1.5h-1zM294.90 282.40h1v1.5h-1zM294.90 291.12h1v1.5h-1zM294.90 299.84h1v1.5h-1zM294.90 308.56h1v1.5h-1zM294.90 317.28h1v1.5h-1zM294.90 326.00h1v1.5h-1zM294.90 334.72h1v1.5h-1zM294.90 343.44h1v1.5h-1zM294.90 352.16h1v1.5h-1zM294.90 360.88h1v1.5h-1zM294.90 369.60h1v1.5h-1zM294.90 378.32h1v1.5h-1zM294.90 387.04h1v1.5h-1zM294.90 395.76h1v1.5h-1zM303.62 64.40h1v1.5h-1zM303.62 73.12h1v1.5h-1zM303.62 81.84h1v1.5h-1zM303.62 90.56h1v1.5h-1zM303.62 99.28h1v1.5h-1zM303.62 108.00h1v1.5h-1zM303.62 116.72h1v1.5h-1zM303.62 125.44h1v1.5h-1zM303.62 134.16h1v1.5h-1zM303.62 142.88h1v1.5h-1zM303.62 151.60h1v1.5h-1zM303.62 160.32h1v1.5h-1zM303.62 169.04h1v1.5h-1zM303.62 177.76h1v1.5h-1zM303.62 186.48h1v1.5h-1zM303.62 195.20h1v1.5h-1zM303.62 203.92h1v1.5h-1zM303.62 212.64h1v1.5h-1zM303.62 221.36h1v1.5h-1zM303.62 230.08h1v1.5h-1zM303.62 238.80h1v1.5h-1zM303.62 247.52h1v1.5h-1zM303.62 256.24h1v1.5h-1zM303.62 264.96h1v1.5h-1zM303.62 273.68h1v1.5h-1zM303.62 282.40h1v1.5h-1zM303.62 291.12h1v1.5h-1zM303.62 299.84h1v1.5h-1zM303.62 308.56h1v1.5h-1zM303.62 317.28h1v1.5h-1zM303.62 326.00h1v1.5h-1zM303.62 334.72h1v1.5h-1zM303.62 343.44h1v1.5h-1zM303.62 352.16h1v1.5h-1zM303.62 360.88h1v1.5h-1zM303.62 369.60h1v1.5h-1zM303.62 378.32h1v1.5h-1zM303.62 387.04h1v1.5h-1zM303.62 395.76h1v1.5h-1zM312.34 64.40h1v1.5h-1zM312.34 73.12h1v1.5h-1zM312.34 81.84h1v1.5h-1zM312.34 90.56h1v1.5h-1zM312.34 99.28h1v1.5h-1zM312.34 108.00h1v1.5h-1zM312.34 116.72h1v1.5h-1zM312.34 125.44h1v1.5h-1zM312.34 134.16h1v1.5h-1zM312.34 142.88h1v1.5h-1zM312.34 151.60h1v1.5h-1zM312.34 160.32h1v1.5h-1zM312.34 169.04h1v1.5h-1zM312.34 177.76h1v1.5h-1zM312.34 186.48h1v1.5h-1zM312.34 195.20h1v1.5h-1zM312.34 203.92h1v1.5h-1zM312.34 212.64h1v1.5h-1zM312.34 221.36h1v1.5h-1zM312.34 230.08h1v1.5h-1zM312.34 238.80h1v1.5h-1zM312.34 247.52h1v1.5h-1zM312.34 256.24h1v1.5h-1zM312.34 264.96h1v1.5h-1zM312.34 273.68h1v1.5h-1zM312.34 282.40h1v1.5h-1zM312.34 291.12h1v1.5h-1zM312.34 299.84h1v1.5h-1zM312.34 308.56h1v1.5h-1zM312.34 317.28h1v1.5h-1zM312.34 326.00h1v1.5h-1zM312.34 334.72h1v1.5h-1zM312.34 343.44h1v1.5h-1zM312.34 352.16h1v1.5h-1zM312.34 360.88h1v1.5h-1zM312.34 369.60h1v1.5h-1zM312.34 378.32h1v1.5h-1zM312.34 387.04h1v1.5h-1zM312.34 395.76h1v1.5h-1zM321.06 64.40h1v1.5h-1zM321.06 73.12h1v1.5h-1zM321.06 81.84h1v1.5h-1zM321.06 90.56h1v1.5h-1zM321.06 99.28h1v1.5h-1zM321.06 108.00h1v1.5h-1zM321.06 116.72h1v1.5h-1zM321.06 125.44h1v1.5h-1zM321.06 134.16h1v1.5h-1zM321.06 142.88h1v1.5h-1zM321.06 151.60h1v1.5h-1zM321.06 160.32h1v1.5h-1zM321.06 169.04h1v1.5h-1zM321.06 177.76h1v1.5h-1zM321.06 186.48h1v1.5h-1zM321.06 195.20h1v1.5h-1zM321.06 203.92h1v1.5h-1zM321.06 212.64h1v1.5h-1zM321.06 221.36h1v1.5h-1zM321.06 230.08h1v1.5h-1zM321.06 238.80h1v1.5h-1zM321.06 247.52h1v1.5h-1zM321.06 256.24h1v1.5h-1zM321.06 264.96h1v1.5h-1zM321.06 273.68h1v1.5h-1zM321.06 282.40h1v1.5h-1zM321.06 291.12h1v1.5h-1zM321.06 299.84h1v1.5h-1zM321.06 308.56h1v1.5h-1zM321.06 317.28h1v1.5h-1zM321.06 326.00h1v1.5h-1zM321.06 334.72h1v1.5h-1zM321.06 343.44h1v1.5h-1zM321.06 352.16h1v1.5h-1zM321.06 360.88h1v1.5h-1zM321.06 369.60h1v1.5h-1zM321.06 378.32h1v1.5h-1zM321.06 387.04h1v1.5h-1zM321.06 395.76h1v1.5h-1zM329.78 64.40h1v1.5h-1zM329.78 73.12h1v1.5h-1zM329.78 81.84h1v1.5h-1zM329.78 90.56h1v1.5h-1zM329.78 99.28h1v1.5h-1zM329.78 108.00h1v1.5h-1zM329.78 116.72h1v1.5h-1zM329.78 125.44h1v1.5h-1zM329.78 134.16h1v1.5h-1zM329.78 142.88h1v1.5h-1zM329.78 151.60h1v1.5h-1zM329.78 160.32h1v1.5h-1zM329.78 169.04h1v1.5h-1zM329.78 177.76h1v1.5h-1zM329.78 186.48h1v1.5h-1zM329.78 195.20h1v1.5h-1zM329.78 203.92h1v1.5h-1zM329.78 212.64h1v1.5h-1zM329.78 221.36h1v1.5h-1zM329.78 230.08h1v1.5h-1zM329.78 238.80h1v1.5h-1zM329.78 247.52h1v1.5h-1zM329.78 256.24h1v1.5h-1zM329.78 264.96h1v1.5h-1zM329.78 273.68h1v1.5h-1zM329.78 282.40h1v1.5h-1zM329.78 291.12h1v1.5h-1zM329.78 299.84h1v1.5h-1zM329.78 308.56h1v1.5h-1zM329.78 317.28h1v1.5h-1zM329.78 326.00h1v1.5h-1zM329.78 334.72h1v1.5h-1zM329.78 343.44h1v1.5h-1zM329.78 352.16h1v1.5h-1zM329.78 360.88h1v1.5h-1zM329.78 369.60h1v1.5h-1zM329.78 378.32h1v1.5h-1zM329.78 387.04h1v1.5h-1zM329.78 395.76h1v1.5h-1zM338.50 64.40h1v1.5h-1zM338.50 73.12h1v1.5h-1zM338.50 81.84h1v1.5h-1zM338.50 90.56h1v1.5h-1zM338.50 99.28h1v1.5h-1zM338.50 108.00h1v1.5h-1zM338.50 116.72h1v1.5h-1zM338.50 125.44h1v1.5h-1zM338.50 134.16h1v1.5h-1zM338.50 142.88h1v1.5h-1zM338.50 151.60h1v1.5h-1zM338.50 160.32h1v1.5h-1zM338.50 169.04h1v1.5h-1zM338.50 177.76h1v1.5h-1zM338.50 186.48h1v1.5h-1zM338.50 195.20h1v1.5h-1zM338.50 203.92h1v1.5h-1zM338.50 212.64h1v1.5h-1zM338.50 221.36h1v1.5h-1zM338.50 230.08h1v1.5h-1zM338.50 238.80h1v1.5h-1zM338.50 247.52h1v1.5h-1zM338.50 256.24h1v1.5h-1zM338.50 264.96h1v1.5h-1zM338.50 273.68h1v1.5h-1zM338.50 282.40h1v1.5h-1zM338.50 291.12h1v1.5h-1zM338.50 299.84h1v1.5h-1zM338.50 308.56h1v1.5h-1zM338.50 317.28h1v1.5h-1zM338.50 326.00h1v1.5h-1zM338.50 334.72h1v1.5h-1zM338.50 343.44h1v1.5h-1zM338.50 352.16h1v1.5h-1zM338.50 360.88h1v1.5h-1zM338.50 369.60h1v1.5h-1zM338.50 378.32h1v1.5h-1zM338.50 387.04h1v1.5h-1zM338.50 395.76h1v1.5h-1zM347.22 64.40h1v1.5h-1zM347.22 73.12h1v1.5h-1zM347.22 81.84h1v1.5h-1zM347.22 90.56h1v1.5h-1zM347.22 99.28h1v1.5h-1zM347.22 108.00h1v1.5h-1zM347.22 116.72h1v1.5h-1zM347.22 125.44h1v1.5h-1zM347.22 134.16h1v1.5h-1zM347.22 142.88h1v1.5h-1zM347.22 151.60h1v1.5h-1zM347.22 160.32h1v1.5h-1zM347.22 169.04h1v1.5h-1zM347.22 177.76h1v1.5h-1zM347.22 186.48h1v1.5h-1zM347.22 195.20h1v1.5h-1zM347.22 203.92h1v1.5h-1zM347.22 212.64h1v1.5h-1zM347.22 221.36h1v1.5h-1zM347.22 230.08h1v1.5h-1zM347.22 238.80h1v1.5h-1zM347.22 247.52h1v1.5h-1zM347.22 256.24h1v1.5h-1zM347.22 264.96h1v1.5h-1zM347.22 273.68h1v1.5h-1zM347.22 282.40h1v1.5h-1zM347.22 291.12h1v1.5h-1zM347.22 299.84h1v1.5h-1zM347.22 308.56h1v1.5h-1zM347.22 317.28h1v1.5h-1zM347.22 326.00h1v1.5h-1zM347.22 334.72h1v1.5h-1zM347.22 343.44h1v1.5h-1zM347.22 352.16h1v1.5h-1zM347.22 360.88h1v1.5h-1zM347.22 369.60h1v1.5h-1zM347.22 378.32h1v1.5h-1zM347.22 387.04h1v1.5h-1zM347.22 395.76h1v1.5h-1zM355.94 64.40h1v1.5h-1zM355.94 73.12h1v1.5h-1zM355.94 81.84h1v1.5h-1zM355.94 90.56h1v1.5h-1zM355.94 99.28h1v1.5h-1zM355.94 108.00h1v1.5h-1zM355.94 116.72h1v1.5h-1zM355.94 125.44h1v1.5h-1zM355.94 134.16h1v1.5h-1zM355.94 142.88h1v1.5h-1zM355.94 151.60h1v1.5h-1zM355.94 160.32h1v1.5h-1zM355.94 169.04h1v1.5h-1zM355.94 177.76h1v1.5h-1zM355.94 186.48h1v1.5h-1zM355.94 195.20h1v1.5h-1zM355.94 203.92h1v1.5h-1zM355.94 212.64h1v1.5h-1zM355.94 221.36h1v1.5h-1zM355.94 230.08h1v1.5h-1zM355.94 238.80h1v1.5h-1zM355.94 247.52h1v1.5h-1zM355.94 256.24h1v1.5h-1zM355.94 264.96h1v1.5h-1zM355.94 273.68h1v1.5h-1zM355.94 282.40h1v1.5h-1zM355.94 291.12h1v1.5h-1zM355.94 299.84h1v1.5h-1zM355.94 308.56h1v1.5h-1zM355.94 317.28h1v1.5h-1zM355.94 326.00h1v1.5h-1zM355.94 334.72h1v1.5h-1zM355.94 343.44h1v1.5h-1zM355.94 352.16h1v1.5h-1zM355.94 360.88h1v1.5h-1zM355.94 369.60h1v1.5h-1zM355.94 378.32h1v1.5h-1zM355.94 387.04h1v1.5h-1zM355.94 395.76h1v1.5h-1zM364.66 64.40h1v1.5h-1zM364.66 73.12h1v1.5h-1zM364.66 81.84h1v1.5h-1zM364.66 90.56h1v1.5h-1zM364.66 99.28h1v1.5h-1zM364.66 108.00h1v1.5h-1zM364.66 116.72h1v1.5h-1zM364.66 125.44h1v1.5h-1zM364.66 134.16h1v1.5h-1zM364.66 142.88h1v1.5h-1zM364.66 151.60h1v1.5h-1zM364.66 160.32h1v1.5h-1zM364.66 169.04h1v1.5h-1zM364.66 177.76h1v1.5h-1zM364.66 186.48h1v1.5h-1zM364.66 195.20h1v1.5h-1zM364.66 203.92h1v1.5h-1zM364.66 212.64h1v1.5h-1zM364.66 221.36h1v1.5h-1zM364.66 230.08h1v1.5h-1zM364.66 238.80h1v1.5h-1zM364.66 247.52h1v1.5h-1zM364.66 256.24h1v1.5h-1zM364.66 264.96h1v1.5h-1zM364.66 273.68h1v1.5h-1zM364.66 282.40h1v1.5h-1zM364.66 291.12h1v1.5h-1zM364.66 299.84h1v1.5h-1zM364.66 308.56h1v1.5h-1zM364.66 317.28h1v1.5h-1zM364.66 326.00h1v1.5h-1zM364.66 334.72h1v1.5h-1zM364.66 343.44h1v1.5h-1zM364.66 352.16h1v1.5h-1zM364.66 360.88h1v1.5h-1zM364.66 369.60h1v1.5h-1zM364.66 378.32h1v1.5h-1zM364.66 387.04h1v1.5h-1zM364.66 395.76h1v1.5h-1zM373.38 64.40h1v1.5h-1zM373.38 73.12h1v1.5h-1zM373.38 81.84h1v1.5h-1zM373.38 90.56h1v1.5h-1zM373.38 99.28h1v1.5h-1zM373.38 108.00h1v1.5h-1zM373.38 116.72h1v1.5h-1zM373.38 125.44h1v1.5h-1zM373.38 134.16h1v1.5h-1zM373.38 142.88h1v1.5h-1zM373.38 151.60h1v1.5h-1zM373.38 160.32h1v1.5h-1zM373.38 169.04h1v1.5h-1zM373.38 177.76h1v1.5h-1zM373.38 186.48h1v1.5h-1zM373.38 195.20h1v1.5h-1zM373.38 203.92h1v1.5h-1zM373.38 212.64h1v1.5h-1zM373.38 221.36h1v1.5h-1zM373.38 230.08h1v1.5h-1zM373.38 238.80h1v1.5h-1zM373.38 247.52h1v1.5h-1zM373.38 256.24h1v1.5h-1zM373.38 264.96h1v1.5h-1zM373.38 273.68h1v1.5h-1zM373.38 282.40h1v1.5h-1zM373.38 291.12h1v1.5h-1zM373.38 299.84h1v1.5h-1zM373.38 308.56h1v1.5h-1zM373.38 317.28h1v1.5h-1zM373.38 326.00h1v1.5h-1zM373.38 334.72h1v1.5h-1zM373.38 343.44h1v1.5h-1zM373.38 352.16h1v1.5h-1zM373.38 360.88h1v1.5h-1zM373.38 369.60h1v1.5h-1zM373.38 378.32h1v1.5h-1zM373.38 387.04h1v1.5h-1zM373.38 395.76h1v1.5h-1zM382.10 64.40h1v1.5h-1zM382.10 73.12h1v1.5h-1zM382.10 81.84h1v1.5h-1zM382.10 90.56h1v1.5h-1zM382.10 99.28h1v1.5h-1zM382.10 108.00h1v1.5h-1zM382.10 116.72h1v1.5h-1zM382.10 125.44h1v1.5h-1zM382.10 134.16h1v1.5h-1zM382.10 142.88h1v1.5h-1zM382.10 151.60h1v1.5h-1zM382.10 160.32h1v1.5h-1zM382.10 169.04h1v1.5h-1zM382.10 177.76h1v1.5h-1zM382.10 186.48h1v1.5h-1zM382.10 195.20h1v1.5h-1zM382.10 203.92h1v1.5h-1zM382.10 212.64h1v1.5h-1zM382.10 221.36h1v1.5h-1zM382.10 230.08h1v1.5h-1zM382.10 238.80h1v1.5h-1zM382.10 247.52h1v1.5h-1zM382.10 256.24h1v1.5h-1zM382.10 264.96h1v1.5h-1zM382.10 273.68h1v1.5h-1zM382.10 282.40h1v1.5h-1zM382.10 291.12h1v1.5h-1zM382.10 299.84h1v1.5h-1zM382.10 308.56h1v1.5h-1zM382.10 317.28h1v1.5h-1zM382.10 326.00h1v1.5h-1zM382.10 334.72h1v1.5h-1zM382.10 343.44h1v1.5h-1zM382.10 352.16h1v1.5h-1zM382.10 360.88h1v1.5h-1zM382.10 369.60h1v1.5h-1zM382.10 378.32h1v1.5h-1zM382.10 387.04h1v1.5h-1zM382.10 395.76h1v1.5h-1zM390.82 64.40h1v1.5h-1zM390.82 73.12h1v1.5h-1zM390.82 81.84h1v1.5h-1zM390.82 90.56h1v1.5h-1zM390.82 99.28h1v1.5h-1zM390.82 108.00h1v1.5h-1zM390.82 116.72h1v1.5h-1zM390.82 125.44h1v1.5h-1zM390.82 134.16h1v1.5h-1zM390.82 142.88h1v1.5h-1zM390.82 151.60h1v1.5h-1zM390.82 160.32h1v1.5h-1zM390.82 169.04h1v1.5h-1zM390.82 177.76h1v1.5h-1zM390.82 186.48h1v1.5h-1zM390.82 195.20h1v1.5h-1zM390.82 203.92h1v1.5h-1zM390.82 212.64h1v1.5h-1zM390.82 221.36h1v1.5h-1zM390.82 230.08h1v1.5h-1zM390.82 238.80h1v1.5h-1zM390.82 247.52h1v1.5h-1zM390.82 256.24h1v1.5h-1zM390.82 264.96h1v1.5h-1zM390.82 273.68h1v1.5h-1zM390.82 282.40h1v1.5h-1zM390.82 291.12h1v1.5h-1zM390.82 299.84h1v1.5h-1zM390.82 308.56h1v1.5h-1zM390.82 317.28h1v1.5h-1zM390.82 326.00h1v1.5h-1zM390.82 334.72h1v1.5h-1zM390.82 343.44h1v1.5h-1zM390.82 352.16h1v1.5h-1zM390.82 360.88h1v1.5h-1zM390.82 369.60h1v1.5h-1zM390.82 378.32h1v1.5h-1zM390.82 387.04h1v1.5h-1zM390.82 395.76h1v1.5h-1zM399.54 64.40h1v1.5h-1zM399.54 73.12h1v1.5h-1zM399.54 81.84h1v1.5h-1zM399.54 90.56h1v1.5h-1zM399.54 99.28h1v1.5h-1zM399.54 108.00h1v1.5h-1zM399.54 116.72h1v1.5h-1zM399.54 125.44h1v1.5h-1zM399.54 134.16h1v1.5h-1zM399.54 142.88h1v1.5h-1zM399.54 151.60h1v1.5h-1zM399.54 160.32h1v1.5h-1zM399.54 169.04h1v1.5h-1zM399.54 177.76h1v1.5h-1zM399.54 186.48h1v1.5h-1zM399.54 195.20h1v1.5h-1zM399.54 203.92h1v1.5h-1zM399.54 212.64h1v1.5h-1zM399.54 221.36h1v1.5h-1zM399.54 230.08h1v1.5h-1zM399.54 238.80h1v1.5h-1zM399.54 247.52h1v1.5h-1zM399.54 256.24h1v1.5h-1zM399.54 264.96h1v1.5h-1zM399.54 273.68h1v1.5h-1zM399.54 282.40h1v1.5h-1zM399.54 291.12h1v1.5h-1zM399.54 299.84h1v1.5h-1zM399.54 308.56h1v1.5h-1zM399.54 317.28h1v1.5h-1zM399.54 326.00h1v1.5h-1zM399.54 334.72h1v1.5h-1zM399.54 343.44h1v1.5h-1zM399.54 352.16h1v1.5h-1zM399.54 360.88h1v1.5h-1zM399.54 369.60h1v1.5h-1zM399.54 378.32h1v1.5h-1zM399.54 387.04h1v1.5h-1zM399.54 395.76h1v1.5h-1zM408.26 64.40h1v1.5h-1zM408.26 73.12h1v1.5h-1zM408.26 81.84h1v1.5h-1zM408.26 90.56h1v1.5h-1zM408.26 99.28h1v1.5h-1zM408.26 108.00h1v1.5h-1zM408.26 116.72h1v1.5h-1zM408.26 125.44h1v1.5h-1zM408.26 134.16h1v1.5h-1zM408.26 142.88h1v1.5h-1zM408.26 151.60h1v1.5h-1zM408.26 160.32h1v1.5h-1zM408.26 169.04h1v1.5h-1zM408.26 177.76h1v1.5h-1zM408.26 186.48h1v1.5h-1zM408.26 195.20h1v1.5h-1zM408.26 203.92h1v1.5h-1zM408.26 212.64h1v1.5h-1zM408.26 221.36h1v1.5h-1zM408.26 230.08h1v1.5h-1zM408.26 238.80h1v1.5h-1zM408.26 247.52h1v1.5h-1zM408.26 256.24h1v1.5h-1zM408.26 264.96h1v1.5h-1zM408.26 273.68h1v1.5h-1zM408.26 282.40h1v1.5h-1zM408.26 291.12h1v1.5h-1zM408.26 299.84h1v1.5h-1zM408.26 308.56h1v1.5h-1zM408.26 317.28h1v1.5h-1zM408.26 326.00h1v1.5h-1zM408.26 334.72h1v1.5h-1zM408.26 343.44h1v1.5h-1zM408.26 352.16h1v1.5h-1zM408.26 360.88h1v1.5h-1zM408.26 369.60h1v1.5h-1zM408.26 378.32h1v1.5h-1zM408.26 387.04h1v1.5h-1zM408.26 395.76h1v1.5h-1zM416.98 64.40h1v1.5h-1zM416.98 73.12h1v1.5h-1zM416.98 81.84h1v1.5h-1zM416.98 90.56h1v1.5h-1zM416.98 99.28h1v1.5h-1zM416.98 108.00h1v1.5h-1zM416.98 116.72h1v1.5h-1zM416.98 125.44h1v1.5h-1zM416.98 134.16h1v1.5h-1zM416.98 142.88h1v1.5h-1zM416.98 151.60h1v1.5h-1zM416.98 160.32h1v1.5h-1zM416.98 169.04h1v1.5h-1zM416.98 177.76h1v1.5h-1zM416.98 186.48h1v1.5h-1zM416.98 195.20h1v1.5h-1zM416.98 203.92h1v1.5h-1zM416.98 212.64h1v1.5h-1zM416.98 221.36h1v1.5h-1zM416.98 230.08h1v1.5h-1zM416.98 238.80h1v1.5h-1zM416.98 247.52h1v1.5h-1zM416.98 256.24h1v1.5h-1zM416.98 264.96h1v1.5h-1zM416.98 273.68h1v1.5h-1zM416.98 282.40h1v1.5h-1zM416.98 291.12h1v1.5h-1zM416.98 299.84h1v1.5h-1zM416.98 308.56h1v1.5h-1zM416.98 317.28h1v1.5h-1zM416.98 326.00h1v1.5h-1zM416.98 334.72h1v1.5h-1zM416.98 343.44h1v1.5h-1zM416.98 352.16h1v1.5h-1zM416.98 360.88h1v1.5h-1zM416.98 369.60h1v1.5h-1zM416.98 378.32h1v1.5h-1zM416.98 387.04h1v1.5h-1zM416.98 395.76h1v1.5h-1zM425.70 64.40h1v1.5h-1zM425.70 73.12h1v1.5h-1zM425.70 81.84h1v1.5h-1zM425.70 90.56h1v1.5h-1zM425.70 99.28h1v1.5h-1zM425.70 108.00h1v1.5h-1zM425.70 116.72h1v1.5h-1zM425.70 125.44h1v1.5h-1zM425.70 134.16h1v1.5h-1zM425.70 142.88h1v1.5h-1zM425.70 151.60h1v1.5h-1zM425.70 160.32h1v1.5h-1zM425.70 169.04h1v1.5h-1zM425.70 177.76h1v1.5h-1zM425.70 186.48h1v1.5h-1zM425.70 195.20h1v1.5h-1zM425.70 203.92h1v1.5h-1zM425.70 212.64h1v1.5h-1zM425.70 221.36h1v1.5h-1zM425.70 230.08h1v1.5h-1zM425.70 238.80h1v1.5h-1zM425.70 247.52h1v1.5h-1zM425.70 256.24h1v1.5h-1zM425.70 264.96h1v1.5h-1zM425.70 273.68h1v1.5h-1zM425.70 282.40h1v1.5h-1zM425.70 291.12h1v1.5h-1zM425.70 299.84h1v1.5h-1zM425.70 308.56h1v1.5h-1zM425.70 317.28h1v1.5h-1zM425.70 326.00h1v1.5h-1zM425.70 334.72h1v1.5h-1zM425.70 343.44h1v1.5h-1zM425.70 352.16h1v1.5h-1zM425.70 360.88h1v1.5h-1zM425.70 369.60h1v1.5h-1zM425.70 378.32h1v1.5h-1zM425.70 387.04h1v1.5h-1zM425.70 395.76h1v1.5h-1zM434.42 64.40h1v1.5h-1zM434.42 73.12h1v1.5h-1zM434.42 81.84h1v1.5h-1zM434.42 90.56h1v1.5h-1zM434.42 99.28h1v1.5h-1zM434.42 108.00h1v1.5h-1zM434.42 116.72h1v1.5h-1zM434.42 125.44h1v1.5h-1zM434.42 134.16h1v1.5h-1zM434.42 142.88h1v1.5h-1zM434.42 151.60h1v1.5h-1zM434.42 160.32h1v1.5h-1zM434.42 169.04h1v1.5h-1zM434.42 177.76h1v1.5h-1zM434.42 186.48h1v1.5h-1zM434.42 195.20h1v1.5h-1zM434.42 203.92h1v1.5h-1zM434.42 212.64h1v1.5h-1zM434.42 221.36h1v1.5h-1zM434.42 230.08h1v1.5h-1zM434.42 238.80h1v1.5h-1zM434.42 247.52h1v1.5h-1zM434.42 256.24h1v1.5h-1zM434.42 264.96h1v1.5h-1zM434.42 273.68h1v1.5h-1zM434.42 282.40h1v1.5h-1zM434.42 291.12h1v1.5h-1zM434.42 299.84h1v1.5h-1zM434.42 308.56h1v1.5h-1zM434.42 317.28h1v1.5h-1zM434.42 326.00h1v1.5h-1zM434.42 334.72h1v1.5h-1zM434.42 343.44h1v1.5h-1zM434.42 352.16h1v1.5h-1zM434.42 360.88h1v1.5h-1zM434.42 369.60h1v1.5h-1zM434.42 378.32h1v1.5h-1zM434.42 387.04h1v1.5h-1zM434.42 395.76h1v1.5h-1zM443.14 64.40h1v1.5h-1zM443.14 73.12h1v1.5h-1zM443.14 81.84h1v1.5h-1zM443.14 90.56h1v1.5h-1zM443.14 99.28h1v1.5h-1zM443.14 108.00h1v1.5h-1zM443.14 116.72h1v1.5h-1zM443.14 125.44h1v1.5h-1zM443.14 134.16h1v1.5h-1zM443.14 142.88h1v1.5h-1zM443.14 151.60h1v1.5h-1zM443.14 160.32h1v1.5h-1zM443.14 169.04h1v1.5h-1zM443.14 177.76h1v1.5h-1zM443.14 186.48h1v1.5h-1zM443.14 195.20h1v1.5h-1zM443.14 203.92h1v1.5h-1zM443.14 212.64h1v1.5h-1zM443.14 221.36h1v1.5h-1zM443.14 230.08h1v1.5h-1zM443.14 238.80h1v1.5h-1zM443.14 247.52h1v1.5h-1zM443.14 256.24h1v1.5h-1zM443.14 264.96h1v1.5h-1zM443.14 273.68h1v1.5h-1zM443.14 282.40h1v1.5h-1zM443.14 291.12h1v1.5h-1zM443.14 299.84h1v1.5h-1zM443.14 308.56h1v1.5h-1zM443.14 317.28h1v1.5h-1zM443.14 326.00h1v1.5h-1zM443.14 334.72h1v1.5h-1zM443.14 343.44h1v1.5h-1zM443.14 352.16h1v1.5h-1zM443.14 360.88h1v1.5h-1zM443.14 369.60h1v1.5h-1zM443.14 378.32h1v1.5h-1zM443.14 387.04h1v1.5h-1zM443.14 395.76h1v1.5h-1zM451.86 64.40h1v1.5h-1zM451.86 73.12h1v1.5h-1zM451.86 81.84h1v1.5h-1zM451.86 90.56h1v1.5h-1zM451.86 99.28h1v1.5h-1zM451.86 108.00h1v1.5h-1zM451.86 116.72h1v1.5h-1zM451.86 125.44h1v1.5h-1zM451.86 134.16h1v1.5h-1zM451.86 142.88h1v1.5h-1zM451.86 151.60h1v1.5h-1zM451.86 160.32h1v1.5h-1zM451.86 169.04h1v1.5h-1zM451.86 177.76h1v1.5h-1zM451.86 186.48h1v1.5h-1zM451.86 195.20h1v1.5h-1zM451.86 203.92h1v1.5h-1zM451.86 212.64h1v1.5h-1zM451.86 221.36h1v1.5h-1zM451.86 230.08h1v1.5h-1zM451.86 238.80h1v1.5h-1zM451.86 247.52h1v1.5h-1zM451.86 256.24h1v1.5h-1zM451.86 264.96h1v1.5h-1zM451.86 273.68h1v1.5h-1zM451.86 282.40h1v1.5h-1zM451.86 291.12h1v1.5h-1zM451.86 299.84h1v1.5h-1zM451.86 308.56h1v1.5h-1zM451.86 317.28h1v1.5h-1zM451.86 326.00h1v1.5h-1zM451.86 334.72h1v1.5h-1zM451.86 343.44h1v1.5h-1zM451.86 352.16h1v1.5h-1zM451.86 360.88h1v1.5h-1zM451.86 369.60h1v1.5h-1zM451.86 378.32h1v1.5h-1zM451.86 387.04h1v1.5h-1zM451.86 395.76h1v1.5h-1zM460.58 64.40h1v1.5h-1zM460.58 73.12h1v1.5h-1zM460.58 81.84h1v1.5h-1zM460.58 90.56h1v1.5h-1zM460.58 99.28h1v1.5h-1zM460.58 108.00h1v1.5h-1zM460.58 116.72h1v1.5h-1zM460.58 125.44h1v1.5h-1zM460.58 134.16h1v1.5h-1zM460.58 142.88h1v1.5h-1zM460.58 151.60h1v1.5h-1zM460.58 160.32h1v1.5h-1zM460.58 169.04h1v1.5h-1zM460.58 177.76h1v1.5h-1zM460.58 186.48h1v1.5h-1zM460.58 195.20h1v1.5h-1zM460.58 203.92h1v1.5h-1zM460.58 212.64h1v1.5h-1zM460.58 221.36h1v1.5h-1zM460.58 230.08h1v1.5h-1zM460.58 238.80h1v1.5h-1zM460.58 247.52h1v1.5h-1zM460.58 256.24h1v1.5h-1zM460.58 264.96h1v1.5h-1zM460.58 273.68h1v1.5h-1zM460.58 282.40h1v1.5h-1zM460.58 291.12h1v1.5h-1zM460.58 299.84h1v1.5h-1zM460.58 308.56h1v1.5h-1zM460.58 317.28h1v1.5h-1zM460.58 326.00h1v1.5h-1zM460.58 334.72h1v1.5h-1zM460.58 343.44h1v1.5h-1zM460.58 352.16h1v1.5h-1zM460.58 360.88h1v1.5h-1zM460.58 369.60h1v1.5h-1zM460.58 378.32h1v1.5h-1zM460.58 387.04h1v1.5h-1zM460.58 395.76h1v1.5h-1zM469.30 64.40h1v1.5h-1zM469.30 73.12h1v1.5h-1zM469.30 81.84h1v1.5h-1zM469.30 90.56h1v1.5h-1zM469.30 99.28h1v1.5h-1zM469.30 108.00h1v1.5h-1zM469.30 116.72h1v1.5h-1zM469.30 125.44h1v1.5h-1zM469.30 134.16h1v1.5h-1zM469.30 142.88h1v1.5h-1zM469.30 151.60h1v1.5h-1zM469.30 160.32h1v1.5h-1zM469.30 169.04h1v1.5h-1zM469.30 177.76h1v1.5h-1zM469.30 186.48h1v1.5h-1zM469.30 195.20h1v1.5h-1zM469.30 203.92h1v1.5h-1zM469.30 212.64h1v1.5h-1zM469.30 221.36h1v1.5h-1zM469.30 230.08h1v1.5h-1zM469.30 238.80h1v1.5h-1zM469.30 247.52h1v1.5h-1zM469.30 256.24h1v1.5h-1zM469.30 264.96h1v1.5h-1zM469.30 273.68h1v1.5h-1zM469.30 282.40h1v1.5h-1zM469.30 291.12h1v1.5h-1zM469.30 299.84h1v1.5h-1zM469.30 308.56h1v1.5h-1zM469.30 317.28h1v1.5h-1zM469.30 326.00h1v1.5h-1zM469.30 334.72h1v1.5h-1zM469.30 343.44h1v1.5h-1zM469.30 352.16h1v1.5h-1zM469.30 360.88h1v1.5h-1zM469.30 369.60h1v1.5h-1zM469.30 378.32h1v1.5h-1zM469.30 387.04h1v1.5h-1zM469.30 395.76h1v1.5h-1zM478.02 64.40h1v1.5h-1zM478.02 73.12h1v1.5h-1zM478.02 81.84h1v1.5h-1zM478.02 90.56h1v1.5h-1zM478.02 99.28h1v1.5h-1zM478.02 108.00h1v1.5h-1zM478.02 116.72h1v1.5h-1zM478.02 125.44h1v1.5h-1zM478.02 134.16h1v1.5h-1zM478.02 142.88h1v1.5h-1zM478.02 151.60h1v1.5h-1zM478.02 160.32h1v1.5h-1zM478.02 169.04h1v1.5h-1zM478.02 177.76h1v1.5h-1zM478.02 186.48h1v1.5h-1zM478.02 195.20h1v1.5h-1zM478.02 203.92h1v1.5h-1zM478.02 212.64h1v1.5h-1zM478.02 221.36h1v1.5h-1zM478.02 230.08h1v1.5h-1zM478.02 238.80h1v1.5h-1zM478.02 247.52h1v1.5h-1zM478.02 256.24h1v1.5h-1zM478.02 264.96h1v1.5h-1zM478.02 273.68h1v1.5h-1zM478.02 282.40h1v1.5h-1zM478.02 291.12h1v1.5h-1zM478.02 299.84h1v1.5h-1zM478.02 308.56h1v1.5h-1zM478.02 317.28h1v1.5h-1zM478.02 326.00h1v1.5h-1zM478.02 334.72h1v1.5h-1zM478.02 343.44h1v1.5h-1zM478.02 352.16h1v1.5h-1zM478.02 360.88h1v1.5h-1zM478.02 369.60h1v1.5h-1zM478.02 378.32h1v1.5h-1zM478.02 387.04h1v1.5h-1zM478.02 395.76h1v1.5h-1zM486.74 64.40h1v1.5h-1zM486.74 73.12h1v1.5h-1zM486.74 81.84h1v1.5h-1zM486.74 90.56h1v1.5h-1zM486.74 99.28h1v1.5h-1zM486.74 108.00h1v1.5h-1zM486.74 116.72h1v1.5h-1zM486.74 125.44h1v1.5h-1zM486.74 134.16h1v1.5h-1zM486.74 142.88h1v1.5h-1zM486.74 151.60h1v1.5h-1zM486.74 160.32h1v1.5h-1zM486.74 169.04h1v1.5h-1zM486.74 177.76h1v1.5h-1zM486.74 186.48h1v1.5h-1zM486.74 195.20h1v1.5h-1zM486.74 203.92h1v1.5h-1zM486.74 212.64h1v1.5h-1zM486.74 221.36h1v1.5h-1zM486.74 230.08h1v1.5h-1zM486.74 238.80h1v1.5h-1zM486.74 247.52h1v1.5h-1zM486.74 256.24h1v1.5h-1zM486.74 264.96h1v1.5h-1zM486.74 273.68h1v1.5h-1zM486.74 282.40h1v1.5h-1zM486.74 291.12h1v1.5h-1zM486.74 299.84h1v1.5h-1zM486.74 308.56h1v1.5h-1zM486.74 317.28h1v1.5h-1zM486.74 326.00h1v1.5h-1zM486.74 334.72h1v1.5h-1zM486.74 343.44h1v1.5h-1zM486.74 352.16h1v1.5h-1zM486.74 360.88h1v1.5h-1zM486.74 369.60h1v1.5h-1zM486.74 378.32h1v1.5h-1zM486.74 387.04h1v1.5h-1zM486.74 395.76h1v1.5h-1zM495.46 64.40h1v1.5h-1zM495.46 73.12h1v1.5h-1zM495.46 81.84h1v1.5h-1zM495.46 90.56h1v1.5h-1zM495.46 99.28h1v1.5h-1zM495.46 108.00h1v1.5h-1zM495.46 116.72h1v1.5h-1zM495.46 125.44h1v1.5h-1zM495.46 134.16h1v1.5h-1zM495.46 142.88h1v1.5h-1zM495.46 151.60h1v1.5h-1zM495.46 160.32h1v1.5h-1zM495.46 169.04h1v1.5h-1zM495.46 177.76h1v1.5h-1zM495.46 186.48h1v1.5h-1zM495.46 195.20h1v1.5h-1zM495.46 203.92h1v1.5h-1zM495.46 212.64h1v1.5h-1zM495.46 221.36h1v1.5h-1zM495.46 230.08h1v1.5h-1zM495.46 238.80h1v1.5h-1zM495.46 247.52h1v1.5h-1zM495.46 256.24h1v1.5h-1zM495.46 264.96h1v1.5h-1zM495.46 273.68h1v1.5h-1zM495.46 282.40h1v1.5h-1zM495.46 291.12h1v1.5h-1zM495.46 299.84h1v1.5h-1zM495.46 308.56h1v1.5h-1zM495.46 317.28h1v1.5h-1zM495.46 326.00h1v1.5h-1zM495.46 334.72h1v1.5h-1zM495.46 343.44h1v1.5h-1zM495.46 352.16h1v1.5h-1zM495.46 360.88h1v1.5h-1zM495.46 369.60h1v1.5h-1zM495.46 378.32h1v1.5h-1zM495.46 387.04h1v1.5h-1zM495.46 395.76h1v1.5h-1zM504.18 64.40h1v1.5h-1zM504.18 73.12h1v1.5h-1zM504.18 81.84h1v1.5h-1zM504.18 90.56h1v1.5h-1zM504.18 99.28h1v1.5h-1zM504.18 108.00h1v1.5h-1zM504.18 116.72h1v1.5h-1zM504.18 125.44h1v1.5h-1zM504.18 134.16h1v1.5h-1zM504.18 142.88h1v1.5h-1zM504.18 151.60h1v1.5h-1zM504.18 160.32h1v1.5h-1zM504.18 169.04h1v1.5h-1zM504.18 177.76h1v1.5h-1zM504.18 186.48h1v1.5h-1zM504.18 195.20h1v1.5h-1zM504.18 203.92h1v1.5h-1zM504.18 212.64h1v1.5h-1zM504.18 221.36h1v1.5h-1zM504.18 230.08h1v1.5h-1zM504.18 238.80h1v1.5h-1zM504.18 247.52h1v1.5h-1zM504.18 256.24h1v1.5h-1zM504.18 264.96h1v1.5h-1zM504.18 273.68h1v1.5h-1zM504.18 282.40h1v1.5h-1zM504.18 291.12h1v1.5h-1zM504.18 299.84h1v1.5h-1zM504.18 308.56h1v1.5h-1zM504.18 317.28h1v1.5h-1zM504.18 326.00h1v1.5h-1zM504.18 334.72h1v1.5h-1zM504.18 343.44h1v1.5h-1zM504.18 352.16h1v1.5h-1zM504.18 360.88h1v1.5h-1zM504.18 369.60h1v1.5h-1zM504.18 378.32h1v1.5h-1zM504.18 387.04h1v1.5h-1zM504.18 395.76h1v1.5h-1zM512.90 64.40h1v1.5h-1zM512.90 73.12h1v1.5h-1zM512.90 81.84h1v1.5h-1zM512.90 90.56h1v1.5h-1zM512.90 99.28h1v1.5h-1zM512.90 108.00h1v1.5h-1zM512.90 116.72h1v1.5h-1zM512.90 125.44h1v1.5h-1zM512.90 134.16h1v1.5h-1zM512.90 142.88h1v1.5h-1zM512.90 151.60h1v1.5h-1zM512.90 160.32h1v1.5h-1zM512.90 169.04h1v1.5h-1zM512.90 177.76h1v1.5h-1zM512.90 186.48h1v1.5h-1zM512.90 195.20h1v1.5h-1zM512.90 203.92h1v1.5h-1zM512.90 212.64h1v1.5h-1zM512.90 221.36h1v1.5h-1zM512.90 230.08h1v1.5h-1zM512.90 238.80h1v1.5h-1zM512.90 247.52h1v1.5h-1zM512.90 256.24h1v1.5h-1zM512.90 264.96h1v1.5h-1zM512.90 273.68h1v1.5h-1zM512.90 282.40h1v1.5h-1zM512.90 291.12h1v1.5h-1zM512.90 299.84h1v1.5h-1zM512.90 308.56h1v1.5h-1zM512.90 317.28h1v1.5h-1zM512.90 326.00h1v1.5h-1zM512.90 334.72h1v1.5h-1zM512.90 343.44h1v1.5h-1zM512.90 352.16h1v1.5h-1zM512.90 360.88h1v1.5h-1zM512.90 369.60h1v1.5h-1zM512.90 378.32h1v1.5h-1zM512.90 387.04h1v1.5h-1zM512.90 395.76h1v1.5h-1zM521.62 64.40h1v1.5h-1zM521.62 73.12h1v1.5h-1zM521.62 81.84h1v1.5h-1zM521.62 90.56h1v1.5h-1zM521.62 99.28h1v1.5h-1zM521.62 108.00h1v1.5h-1zM521.62 116.72h1v1.5h-1zM521.62 125.44h1v1.5h-1zM521.62 134.16h1v1.5h-1zM521.62 142.88h1v1.5h-1zM521.62 151.60h1v1.5h-1zM521.62 160.32h1v1.5h-1zM521.62 169.04h1v1.5h-1zM521.62 177.76h1v1.5h-1zM521.62 186.48h1v1.5h-1zM521.62 195.20h1v1.5h-1zM521.62 203.92h1v1.5h-1zM521.62 212.64h1v1.5h-1zM521.62 221.36h1v1.5h-1zM521.62 230.08h1v1.5h-1zM521.62 238.80h1v1.5h-1zM521.62 247.52h1v1.5h-1zM521.62 256.24h1v1.5h-1zM521.62 264.96h1v1.5h-1zM521.62 273.68h1v1.5h-1zM521.62 282.40h1v1.5h-1zM521.62 291.12h1v1.5h-1zM521.62 299.84h1v1.5h-1zM521.62 308.56h1v1.5h-1zM521.62 317.28h1v1.5h-1zM521.62 326.00h1v1.5h-1zM521.62 334.72h1v1.5h-1zM521.62 343.44h1v1.5h-1zM521.62 352.16h1v1.5h-1zM521.62 360.88h1v1.5h-1zM521.62 369.60h1v1.5h-1zM521.62 378.32h1v1.5h-1zM521.62 387.04h1v1.5h-1zM521.62 395.76h1v1.5h-1zM530.34 64.40h1v1.5h-1zM530.34 73.12h1v1.5h-1zM530.34 81.84h1v1.5h-1zM530.34 90.56h1v1.5h-1zM530.34 99.28h1v1.5h-1zM530.34 108.00h1v1.5h-1zM530.34 116.72h1v1.5h-1zM530.34 125.44h1v1.5h-1zM530.34 134.16h1v1.5h-1zM530.34 142.88h1v1.5h-1zM530.34 151.60h1v1.5h-1zM530.34 160.32h1v1.5h-1zM530.34 169.04h1v1.5h-1zM530.34 177.76h1v1.5h-1zM530.34 186.48h1v1.5h-1zM530.34 195.20h1v1.5h-1zM530.34 203.92h1v1.5h-1zM530.34 212.64h1v1.5h-1zM530.34 221.36h1v1.5h-1zM530.34 230.08h1v1.5h-1zM530.34 238.80h1v1.5h-1zM530.34 247.52h1v1.5h-1zM530.34 256.24h1v1.5h-1zM530.34 264.96h1v1.5h-1zM530.34 273.68h1v1.5h-1zM530.34 282.40h1v1.5h-1zM530.34 291.12h1v1.5h-1zM530.34 299.84h1v1.5h-1zM530.34 308.56h1v1.5h-1zM530.34 317.28h1v1.5h-1zM530.34 326.00h1v1.5h-1zM530.34 334.72h1v1.5h-1zM530.34 343.44h1v1.5h-1zM530.34 352.16h1v1.5h-1zM530.34 360.88h1v1.5h-1zM530.34 369.60h1v1.5h-1zM530.34 378.32h1v1.5h-1zM530.34 387.04h1v1.5h-1zM530.34 395.76h1v1.5h-1zM539.06 64.40h1v1.5h-1zM539.06 73.12h1v1.5h-1zM539.06 81.84h1v1.5h-1zM539.06 90.56h1v1.5h-1zM539.06 99.28h1v1.5h-1zM539.06 108.00h1v1.5h-1zM539.06 116.72h1v1.5h-1zM539.06 125.44h1v1.5h-1zM539.06 134.16h1v1.5h-1zM539.06 142.88h1v1.5h-1zM539.06 151.60h1v1.5h-1zM539.06 160.32h1v1.5h-1zM539.06 169.04h1v1.5h-1zM539.06 177.76h1v1.5h-1zM539.06 186.48h1v1.5h-1zM539.06 195.20h1v1.5h-1zM539.06 203.92h1v1.5h-1zM539.06 212.64h1v1.5h-1zM539.06 221.36h1v1.5h-1zM539.06 230.08h1v1.5h-1zM539.06 238.80h1v1.5h-1zM539.06 247.52h1v1.5h-1zM539.06 256.24h1v1.5h-1zM539.06 264.96h1v1.5h-1zM539.06 273.68h1v1.5h-1zM539.06 282.40h1v1.5h-1zM539.06 291.12h1v1.5h-1zM539.06 299.84h1v1.5h-1zM539.06 308.56h1v1.5h-1zM539.06 317.28h1v1.5h-1zM539.06 326.00h1v1.5h-1zM539.06 334.72h1v1.5h-1zM539.06 343.44h1v1.5h-1zM539.06 352.16h1v1.5h-1zM539.06 360.88h1v1.5h-1zM539.06 369.60h1v1.5h-1zM539.06 378.32h1v1.5h-1zM539.06 387.04h1v1.5h-1zM539.06 395.76h1v1.5h-1zM547.78 64.40h1v1.5h-1zM547.78 73.12h1v1.5h-1zM547.78 81.84h1v1.5h-1zM547.78 90.56h1v1.5h-1zM547.78 99.28h1v1.5h-1zM547.78 108.00h1v1.5h-1zM547.78 116.72h1v1.5h-1zM547.78 125.44h1v1.5h-1zM547.78 134.16h1v1.5h-1zM547.78 142.88h1v1.5h-1zM547.78 151.60h1v1.5h-1zM547.78 160.32h1v1.5h-1zM547.78 169.04h1v1.5h-1zM547.78 177.76h1v1.5h-1zM547.78 186.48h1v1.5h-1zM547.78 195.20h1v1.5h-1zM547.78 203.92h1v1.5h-1zM547.78 212.64h1v1.5h-1zM547.78 221.36h1v1.5h-1zM547.78 230.08h1v1.5h-1zM547.78 238.80h1v1.5h-1zM547.78 247.52h1v1.5h-1zM547.78 256.24h1v1.5h-1zM547.78 264.96h1v1.5h-1zM547.78 273.68h1v1.5h-1zM547.78 282.40h1v1.5h-1zM547.78 291.12h1v1.5h-1zM547.78 299.84h1v1.5h-1zM547.78 308.56h1v1.5h-1zM547.78 317.28h1v1.5h-1zM547.78 326.00h1v1.5h-1zM547.78 334.72h1v1.5h-1zM547.78 343.44h1v1.5h-1zM547.78 352.16h1v1.5h-1zM547.78 360.88h1v1.5h-1zM547.78 369.60h1v1.5h-1zM547.78 378.32h1v1.5h-1zM547.78 387.04h1v1.5h-1zM547.78 395.76h1v1.5h-1zM556.50 64.40h1v1.5h-1zM556.50 73.12h1v1.5h-1zM556.50 81.84h1v1.5h-1zM556.50 90.56h1v1.5h-1zM556.50 99.28h1v1.5h-1zM556.50 108.00h1v1.5h-1zM556.50 116.72h1v1.5h-1zM556.50 125.44h1v1.5h-1zM556.50 134.16h1v1.5h-1zM556.50 142.88h1v1.5h-1zM556.50 151.60h1v1.5h-1zM556.50 160.32h1v1.5h-1zM556.50 169.04h1v1.5h-1zM556.50 177.76h1v1.5h-1zM556.50 186.48h1v1.5h-1zM556.50 195.20h1v1.5h-1zM556.50 203.92h1v1.5h-1zM556.50 212.64h1v1.5h-1zM556.50 221.36h1v1.5h-1zM556.50 230.08h1v1.5h-1zM556.50 238.80h1v1.5h-1zM556.50 247.52h1v1.5h-1zM556.50 256.24h1v1.5h-1zM556.50 264.96h1v1.5h-1zM556.50 273.68h1v1.5h-1zM556.50 282.40h1v1.5h-1zM556.50 291.12h1v1.5h-1zM556.50 299.84h1v1.5h-1zM556.50 308.56h1v1.5h-1zM556.50 317.28h1v1.5h-1zM556.50 326.00h1v1.5h-1zM556.50 334.72h1v1.5h-1zM556.50 343.44h1v1.5h-1zM556.50 352.16h1v1.5h-1zM556.50 360.88h1v1.5h-1zM556.50 369.60h1v1.5h-1zM556.50 378.32h1v1.5h-1zM556.50 387.04h1v1.5h-1zM556.50 395.76h1v1.5h-1zM565.22 64.40h1v1.5h-1zM565.22 73.12h1v1.5h-1zM565.22 81.84h1v1.5h-1zM565.22 90.56h1v1.5h-1zM565.22 99.28h1v1.5h-1zM565.22 108.00h1v1.5h-1zM565.22 116.72h1v1.5h-1zM565.22 125.44h1v1.5h-1zM565.22 134.16h1v1.5h-1zM565.22 142.88h1v1.5h-1zM565.22 151.60h1v1.5h-1zM565.22 160.32h1v1.5h-1zM565.22 169.04h1v1.5h-1zM565.22 177.76h1v1.5h-1zM565.22 186.48h1v1.5h-1zM565.22 195.20h1v1.5h-1zM565.22 203.92h1v1.5h-1zM565.22 212.64h1v1.5h-1zM565.22 221.36h1v1.5h-1zM565.22 230.08h1v1.5h-1zM565.22 238.80h1v1.5h-1zM565.22 247.52h1v1.5h-1zM565.22 256.24h1v1.5h-1zM565.22 264.96h1v1.5h-1zM565.22 273.68h1v1.5h-1zM565.22 282.40h1v1.5h-1zM565.22 291.12h1v1.5h-1zM565.22 299.84h1v1.5h-1zM565.22 308.56h1v1.5h-1zM565.22 317.28h1v1.5h-1zM565.22 326.00h1v1.5h-1zM565.22 334.72h1v1.5h-1zM565.22 343.44h1v1.5h-1zM565.22 352.16h1v1.5h-1zM565.22 360.88h1v1.5h-1zM565.22 369.60h1v1.5h-1zM565.22 378.32h1v1.5h-1zM565.22 387.04h1v1.5h-1zM565.22 395.76h1v1.5h-1zM573.94 64.40h1v1.5h-1zM573.94 73.12h1v1.5h-1zM573.94 81.84h1v1.5h-1zM573.94 90.56h1v1.5h-1zM573.94 99.28h1v1.5h-1zM573.94 108.00h1v1.5h-1zM573.94 116.72h1v1.5h-1zM573.94 125.44h1v1.5h-1zM573.94 134.16h1v1.5h-1zM573.94 142.88h1v1.5h-1zM573.94 151.60h1v1.5h-1zM573.94 160.32h1v1.5h-1zM573.94 169.04h1v1.5h-1zM573.94 177.76h1v1.5h-1zM573.94 186.48h1v1.5h-1zM573.94 195.20h1v1.5h-1zM573.94 203.92h1v1.5h-1zM573.94 212.64h1v1.5h-1zM573.94 221.36h1v1.5h-1zM573.94 230.08h1v1.5h-1zM573.94 238.80h1v1.5h-1zM573.94 247.52h1v1.5h-1zM573.94 256.24h1v1.5h-1zM573.94 264.96h1v1.5h-1zM573.94 273.68h1v1.5h-1zM573.94 282.40h1v1.5h-1zM573.94 291.12h1v1.5h-1zM573.94 299.84h1v1.5h-1zM573.94 308.56h1v1.5h-1zM573.94 317.28h1v1.5h-1zM573.94 326.00h1v1.5h-1zM573.94 334.72h1v1.5h-1zM573.94 343.44h1v1.5h-1zM573.94 352.16h1v1.5h-1zM573.94 360.88h1v1.5h-1zM573.94 369.60h1v1.5h-1zM573.94 378.32h1v1.5h-1zM573.94 387.04h1v1.5h-1zM573.94 395.76h1v1.5h-1zM582.66 64.40h1v1.5h-1zM582.66 73.12h1v1.5h-1zM582.66 81.84h1v1.5h-1zM582.66 90.56h1v1.5h-1zM582.66 99.28h1v1.5h-1zM582.66 108.00h1v1.5h-1zM582.66 116.72h1v1.5h-1zM582.66 125.44h1v1.5h-1zM582.66 134.16h1v1.5h-1zM582.66 142.88h1v1.5h-1zM582.66 151.60h1v1.5h-1zM582.66 160.32h1v1.5h-1zM582.66 169.04h1v1.5h-1zM582.66 177.76h1v1.5h-1zM582.66 186.48h1v1.5h-1zM582.66 195.20h1v1.5h-1zM582.66 203.92h1v1.5h-1zM582.66 212.64h1v1.5h-1zM582.66 221.36h1v1.5h-1zM582.66 230.08h1v1.5h-1zM582.66 238.80h1v1.5h-1zM582.66 247.52h1v1.5h-1zM582.66 256.24h1v1.5h-1zM582.66 264.96h1v1.5h-1zM582.66 273.68h1v1.5h-1zM582.66 282.40h1v1.5h-1zM582.66 291.12h1v1.5h-1zM582.66 299.84h1v1.5h-1zM582.66 308.56h1v1.5h-1zM582.66 317.28h1v1.5h-1zM582.66 326.00h1v1.5h-1zM582.66 334.72h1v1.5h-1zM582.66 343.44h1v1.5h-1zM582.66 352.16h1v1.5h-1zM582.66 360.88h1v1.5h-1zM582.66 369.60h1v1.5h-1zM582.66 378.32h1v1.5h-1zM582.66 387.04h1v1.5h-1zM582.66 395.76h1v1.5h-1z" fill="#dadada"/><path d="M163.10 52.3h1v2h-1zM171.82 52.3h1v2h-1zM180.54 52.3h1v2h-1zM189.26 52.3h1v2h-1zM197.98 52.3h1v2h-1zM206.70 50.2h1.2v4h-1.2zM215.42 52.3h1v2h-1zM224.14 52.3h1v2h-1zM232.86 52.3h1v2h-1zM241.58 52.3h1v2h-1zM250.30 52.3h1v2h-1zM259.02 52.3h1v2h-1zM267.74 52.3h1v2h-1zM276.46 52.3h1v2h-1zM285.18 52.3h1v2h-1zM293.90 50.2h1.2v4h-1.2zM302.62 52.3h1v2h-1zM311.34 52.3h1v2h-1zM320.06 52.3h1v2h-1zM328.78 52.3h1v2h-1zM337.50 52.3h1v2h-1zM346.22 52.3h1v2h-1zM354.94 52.3h1v2h-1zM363.66 52.3h1v2h-1zM372.38 52.3h1v2h-1zM381.10 50.2h1.2v4h-1.2zM389.82 52.3h1v2h-1zM398.54 52.3h1v2h-1zM407.26 52.3h1v2h-1zM415.98 52.3h1v2h-1zM424.70 52.3h1v2h-1zM433.42 52.3h1v2h-1zM442.14 52.3h1v2h-1zM450.86 52.3h1v2h-1zM459.58 52.3h1v2h-1zM468.30 50.2h1.2v4h-1.2zM477.02 52.3h1v2h-1zM485.74 52.3h1v2h-1zM494.46 52.3h1v2h-1zM503.18 52.3h1v2h-1zM511.90 52.3h1v2h-1zM520.62 52.3h1v2h-1zM529.34 52.3h1v2h-1zM538.06 52.3h1v2h-1zM546.78 52.3h1v2h-1zM555.50 50.2h1.2v4h-1.2zM564.22 52.3h1v2h-1zM572.94 52.3h1v2h-1zM581.66 52.3h1v2h-1zM157.3 64.10h2v1h-2zM154.8 72.82h4.2v1.2h-4.2zM157.3 81.54h2v1h-2zM157.3 90.26h2v1h-2zM157.3 98.98h2v1h-2zM157.3 107.70h2v1h-2zM157.3 116.42h2v1h-2zM157.3 125.14h2v1h-2zM157.3 133.86h2v1h-2zM157.3 142.58h2v1h-2zM157.3 151.30h2v1h-2zM154.8 160.02h4.2v1.2h-4.2zM157.3 168.74h2v1h-2zM157.3 177.46h2v1h-2zM157.3 186.18h2v1h-2zM157.3 194.90h2v1h-2zM157.3 203.62h2v1h-2zM157.3 212.34h2v1h-2zM157.3 221.06h2v1h-2zM157.3 229.78h2v1h-2zM157.3 238.50h2v1h-2zM154.8 247.22h4.2v1.2h-4.2zM157.3 255.94h2v1h-2zM157.3 264.66h2v1h-2zM157.3 273.38h2v1h-2zM157.3 282.10h2v1h-2zM157.3 290.82h2v1h-2zM157.3 299.54h2v1h-2zM157.3 308.26h2v1h-2zM157.3 316.98h2v1h-2zM157.3 325.70h2v1h-2zM154.8 334.42h4.2v1.2h-4.2zM157.3 343.14h2v1h-2zM157.3 351.86h2v1h-2zM157.3 360.58h2v1h-2zM157.3 369.30h2v1h-2zM157.3 378.02h2v1h-2zM157.3 386.74h2v1h-2zM157.3 395.46h2v1h-2z" fill="#4a4a4a"/><rect x="160" y="54.3" width="438.5" height="1.4" fill="#8a8a8a"/><rect x="159.8" y="54.3" width="1.4" height="354" fill="#8a8a8a"/><rect x="146.8" y="42.6" width="12" height="10.5" fill="#828282"/><rect x="589.2" y="42.7" width="9.4" height="10.2" fill="#828282"/><rect x="146.8" y="400" width="12" height="9" fill="#828282"/><rect x="321.4" y="42.5" width="1.4" height="11.5" fill="#f6d8de"/><path d="M321 42.5V54" stroke="#b83050" stroke-width="1" stroke-dasharray="1.4 0.9"/><rect x="147" y="186.6" width="11.5" height="1.6" fill="#f6d8de"/><path d="M147 186.2H158.5" stroke="#b83050" stroke-width="1" stroke-dasharray="1.4 0.9"/></svg>
<div class="t" style="left:206.9px;top:46.6px;transform:translate(-50%,-50%);font-size:6px;color:#333">20</div>
<div class="t" style="left:294.1px;top:46.6px;transform:translate(-50%,-50%);font-size:6px;color:#333">30</div>
<div class="t" style="left:381.3px;top:46.6px;transform:translate(-50%,-50%);font-size:6px;color:#333">40</div>
<div class="t" style="left:468.5px;top:46.6px;transform:translate(-50%,-50%);font-size:6px;color:#333">50</div>
<div class="t" style="left:555.7px;top:46.6px;transform:translate(-50%,-50%);font-size:6px;color:#333">60</div>
<div class="t" style="left:151.5px;top:73.2px;transform:translate(-50%,-50%) rotate(-90deg);font-size:5.6px;color:#333">10</div>
<div class="t" style="left:151.5px;top:160.4px;transform:translate(-50%,-50%) rotate(-90deg);font-size:5.6px;color:#333">20</div>
<div class="t" style="left:151.5px;top:247.6px;transform:translate(-50%,-50%) rotate(-90deg);font-size:5.6px;color:#333">30</div>
<div class="t" style="left:151.5px;top:334.8px;transform:translate(-50%,-50%) rotate(-90deg);font-size:5.6px;color:#333">40</div>
<div class="a" style="left:589px;top:53px;width:9.5px;height:347px;background:#e9e9e9"></div>
<div class="a" style="left:590px;top:89.7px;width:8px;height:126px;background:#cdcdcd"></div>
<div class="a" style="left:161px;top:400px;width:428px;height:8.5px;background:#ececec"></div>
<div class="a" style="left:242px;top:400.5px;width:242px;height:7.5px;background:#cdcdcd"></div>
<svg width="748" height="531"><path d="M591.5 61.5l2-2l2 2M591.5 394l2 2l2-2" stroke="#505050" stroke-width="0.8" fill="none"/><path d="M166.5 402.3l-2 2l2 2M583 402.3l2 2l-2 2" stroke="#505050" stroke-width="0.8" fill="none"/></svg>
<div class="a cv" style="left:0;top:0;width:748px;height:531px;clip-path:inset(41px 159px 131px 161px)"><svg width="748" height="531"><defs><linearGradient id="sal" x1="0" y1="0" x2="0" y2="1"><stop offset="0" stop-color="#fbdccf"/><stop offset="1" stop-color="#f0a58c"/></linearGradient><linearGradient id="lb" x1="0" y1="0" x2="0" y2="1"><stop offset="0" stop-color="#e6f0f6"/><stop offset="1" stop-color="#bed8e8"/></linearGradient></defs><path d="M234 187.5 L277.5 179 L321 187.5" stroke="#b49a48" stroke-width="4" fill="none" stroke-linejoin="round"/><path d="M234 187.5 L277.5 179 L321 187.5" stroke="#eed98a" stroke-width="2.3" fill="none" stroke-linejoin="round"/><path d="M234 196 C241 196 241 200 243 206 C245 213 245 214 250 214" stroke="#8e2424" stroke-width="1.5" fill="none"/><path d="M234 231 C243 231 243 236 243 242 V400" stroke="#aaa882" stroke-width="3.8" fill="none"/><path d="M234 231 C243 231 243 236 243 242 V400" stroke="#e2e2bc" stroke-width="2.2" fill="none"/><rect x="173.2" y="126.2" width="61.5" height="113.8" rx="3" fill="#a9c2df" stroke="#55657a" stroke-width="1"/><path d="M173.2 138 V129.2 a3 3 0 0 1 3 -3 H231.7 a3 3 0 0 1 3 3 V138 z" fill="url(#sal)" stroke="#7a6a66" stroke-width="0.8"/><path d="M173.5 138.3 H234.5" stroke="#5a5a6a" stroke-width="1"/><circle cx="179.5" cy="133" r="3.5" fill="#f4d4cc" stroke="#c08070" stroke-width="0.6"/><path d="M177 135 q2 -3 5 -2" stroke="#b04040" stroke-width="0.7" fill="none"/><path d="M235 140.3 H213.5 a3 3 0 0 0 -3 3 V170.8 a3 3 0 0 0 3 3 H235 z" fill="#8ccbf3" stroke="#3f5f82" stroke-width="1"/><path d="M235 175 H213.5 a3 3 0 0 0 -3 3 V196.7 a3 3 0 0 0 3 3 H235 z" fill="#8ccbf3" stroke="#3f5f82" stroke-width="1"/><path d="M235 201 H213.5 a3 3 0 0 0 -3 3 V222.8 a3 3 0 0 0 3 3 H235 z" fill="#8ccbf3" stroke="#3f5f82" stroke-width="1"/><rect x="170.3" y="141.5" width="5.7" height="5.6" fill="#3ad03a" stroke="#1a7a1a" stroke-width="0.7"/><path d="M177 146.5 h1.5 v-4.5 h2.5 v4.5 h1.5" stroke="#1a2a50" stroke-width="1.1" fill="none"/><path d="M224.5 155.6 v-3 l1.2 -2.6 l1.2 2 q1 -1.6 2 -0.8 q1 0.6 1.5 2.4 v2 z" fill="#f2b248"/><path d="M224.5 153.4 l1.2 -3.4 l1.3 2.4 q1 -1.6 2 -0.8 q0.9 0.6 1.5 2.4" stroke="#b02a14" stroke-width="1.1" fill="none"/><rect x="225.2" y="154.4" width="4.5" height="1.2" fill="#f8e090"/><rect x="232.4" y="150.5" width="4" height="4.2" rx="1.2" fill="#fff" stroke="#2a3a50" stroke-width="0.8"/><path d="M224.5 164 v-3 l1.2 -2.6 l1.2 2 q1 -1.6 2 -0.8 q1 0.6 1.5 2.4 v2 z" fill="#f2b248"/><path d="M224.5 161.8 l1.2 -3.4 l1.3 2.4 q1 -1.6 2 -0.8 q0.9 0.6 1.5 2.4" stroke="#b02a14" stroke-width="1.1" fill="none"/><rect x="225.2" y="162.8" width="4.5" height="1.2" fill="#f8e090"/><rect x="232.4" y="158.9" width="4" height="4.2" rx="1.2" fill="#fff" stroke="#2a3a50" stroke-width="0.8"/><path d="M224.5 172.6 v-3 l1.2 -2.6 l1.2 2 q1 -1.6 2 -0.8 q1 0.6 1.5 2.4 v2 z" fill="#f2b248"/><path d="M224.5 170.4 l1.2 -3.4 l1.3 2.4 q1 -1.6 2 -0.8 q0.9 0.6 1.5 2.4" stroke="#b02a14" stroke-width="1.1" fill="none"/><rect x="225.2" y="171.4" width="4.5" height="1.2" fill="#f8e090"/><rect x="232.4" y="167.5" width="4" height="4.2" rx="1.2" fill="#fff" stroke="#2a3a50" stroke-width="0.8"/><path d="M224.5 190.6 v-3 l1.2 -2.6 l1.2 2 q1 -1.6 2 -0.8 q1 0.6 1.5 2.4 v2 z" fill="#f2b248"/><path d="M224.5 188.4 l1.2 -3.4 l1.3 2.4 q1 -1.6 2 -0.8 q0.9 0.6 1.5 2.4" stroke="#b02a14" stroke-width="1.1" fill="none"/><rect x="225.2" y="189.4" width="4.5" height="1.2" fill="#f8e090"/><rect x="232.3" y="185.5" width="4.2" height="4.2" fill="#2a3a6a" stroke="#1a2040" stroke-width="0.6"/><path d="M224.5 199 v-3 l1.2 -2.6 l1.2 2 q1 -1.6 2 -0.8 q1 0.6 1.5 2.4 v2 z" fill="#f2b248"/><path d="M224.5 196.8 l1.2 -3.4 l1.3 2.4 q1 -1.6 2 -0.8 q0.9 0.6 1.5 2.4" stroke="#b02a14" stroke-width="1.1" fill="none"/><rect x="225.2" y="197.8" width="4.5" height="1.2" fill="#f8e090"/><rect x="232.4" y="193.9" width="4" height="4.2" rx="1.2" fill="#fff" stroke="#2a3a50" stroke-width="0.8"/><rect x="224" y="209.9" width="7.2" height="7.2" rx="2" fill="#f2a898"/><circle cx="227.6" cy="213.5" r="2.6" fill="#e86a58"/><circle cx="227.3" cy="213.0" r="1.2" fill="#f8b8a8"/><rect x="232.4" y="211.4" width="4" height="4.2" rx="1.2" fill="#fff" stroke="#2a3a50" stroke-width="0.8"/><rect x="224" y="218.4" width="7.2" height="7.2" rx="2" fill="#f2a898"/><circle cx="227.6" cy="222" r="2.6" fill="#e86a58"/><circle cx="227.3" cy="221.5" r="1.2" fill="#f8b8a8"/><rect x="232.4" y="219.9" width="4" height="4.2" rx="1.2" fill="#fff" stroke="#2a3a50" stroke-width="0.8"/><path d="M225 227.5 v5.5 M224.2 227.5 h1.6 M224.2 233 h1.6" stroke="#1a2aa0" stroke-width="1"/><path d="M227 228.5 h1.6 l-1.6 2 h1.8" stroke="#1a2aa0" stroke-width="0.8" fill="none"/><path d="M233 228.5 q-2.5 -1.2 -3.2 1.5 q-0.4 3 3.2 3" stroke="#1a2aa0" stroke-width="1.1" fill="none"/><path d="M225 236 l2.5 -2 l1.5 1.5 l-2 2 z" fill="#a07060"/><rect x="232.4" y="228.9" width="4" height="4.2" rx="1.2" fill="#2a3a5a" stroke="#2a3a50" stroke-width="0.8"/><rect x="251.4" y="196.2" width="53" height="26.5" rx="3" fill="#a9c2df" stroke="#55657a" stroke-width="1"/><path d="M251.4 208.6 V199.2 a3 3 0 0 1 3 -3 H301.4 a3 3 0 0 1 3 3 V208.6 z" fill="url(#sal)" stroke="#7a6a66" stroke-width="0.8"/><path d="M251.6 208.8 H304.2" stroke="#5a5a6a" stroke-width="1"/><circle cx="258" cy="202.7" r="3.3" fill="#f0c0b0" stroke="#a06050" stroke-width="0.6"/><path d="M256 204.5 l2 -3.5 l2 3.5" stroke="#a04030" stroke-width="0.7" fill="none"/><rect x="249" y="211" width="5.7" height="5.7" fill="#3ad03a" stroke="#1a7a1a" stroke-width="0.7"/><path d="M255.60000000000002 217 v-3 l1.2 -2.6 l1.2 2 q1 -1.6 2 -0.8 q1 0.6 1.5 2.4 v2 z" fill="#f2b248"/><path d="M255.60000000000002 214.8 l1.2 -3.4 l1.3 2.4 q1 -1.6 2 -0.8 q0.9 0.6 1.5 2.4" stroke="#b02a14" stroke-width="1.1" fill="none"/><rect x="256.3" y="215.8" width="4.5" height="1.2" fill="#f8e090"/><path d="M294.3 217 v-3 l1.2 -2.6 l1.2 2 q1 -1.6 2 -0.8 q1 0.6 1.5 2.4 v2 z" fill="#f2b248"/><path d="M294.3 214.8 l1.2 -3.4 l1.3 2.4 q1 -1.6 2 -0.8 q0.9 0.6 1.5 2.4" stroke="#b02a14" stroke-width="1.1" fill="none"/><rect x="295" y="215.8" width="4.5" height="1.2" fill="#f8e090"/><circle cx="305" cy="214" r="1.9" fill="#fff" stroke="#3a4a60" stroke-width="0.8"/><rect x="321.4" y="161.5" width="70.3" height="43.5" rx="3" fill="#fbe2d4" stroke="#d89080" stroke-width="1"/><path d="M321.4 173.4 V164.5 a3 3 0 0 1 3 -3 H388.7 a3 3 0 0 1 3 3 V173.4 z" fill="url(#lb)" stroke="#c8908a" stroke-width="0.8"/><path d="M321.6 173.6 H391.5" stroke="#c08080" stroke-width="1"/><circle cx="327" cy="167.5" r="3.4" fill="#c8d0d4" stroke="#2a2a2a" stroke-width="0.8"/><path d="M323.8 168.5 q3 3 6.5 0 v1.5 q-3 2 -6.5 0 z" fill="#1a1a1a"/><path d="M328 169.5 h3.5 l-1 -1.2 M331.5 169.5 l-1 1.2" stroke="#111" stroke-width="1" fill="none"/><path d="M325 166 q1 -1.2 2.5 -0.5" stroke="#f4f4f4" stroke-width="0.8" fill="none"/><rect x="322.4" y="175.2" width="36.9" height="25.3" rx="2.5" fill="#d6692f"/><rect x="363.3" y="175.2" width="28.1" height="25.3" rx="2.5" fill="#d6692f"/><path d="M326.8 190.7 v-3 l1.2 -2.6 l1.2 2 q1 -1.6 2 -0.8 q1 0.6 1.5 2.4 v2 z" fill="#f2b248"/><path d="M326.8 188.5 l1.2 -3.4 l1.3 2.4 q1 -1.6 2 -0.8 q0.9 0.6 1.5 2.4" stroke="#b02a14" stroke-width="1.1" fill="none"/><rect x="327.5" y="189.5" width="4.5" height="1.2" fill="#f8e090"/><path d="M326.8 199 v-3 l1.2 -2.6 l1.2 2 q1 -1.6 2 -0.8 q1 0.6 1.5 2.4 v2 z" fill="#f2b248"/><path d="M326.8 196.8 l1.2 -3.4 l1.3 2.4 q1 -1.6 2 -0.8 q0.9 0.6 1.5 2.4" stroke="#b02a14" stroke-width="1.1" fill="none"/><rect x="327.5" y="197.8" width="4.5" height="1.2" fill="#f8e090"/><path d="M381.6 190.7 v-3 l1.2 -2.6 l1.2 2 q1 -1.6 2 -0.8 q1 0.6 1.5 2.4 v2 z" fill="#f2b248"/><path d="M381.6 188.5 l1.2 -3.4 l1.3 2.4 q1 -1.6 2 -0.8 q0.9 0.6 1.5 2.4" stroke="#b02a14" stroke-width="1.1" fill="none"/><rect x="382.3" y="189.5" width="4.5" height="1.2" fill="#f8e090"/><path d="M381.6 199 v-3 l1.2 -2.6 l1.2 2 q1 -1.6 2 -0.8 q1 0.6 1.5 2.4 v2 z" fill="#f2b248"/><path d="M381.6 196.8 l1.2 -3.4 l1.3 2.4 q1 -1.6 2 -0.8 q0.9 0.6 1.5 2.4" stroke="#b02a14" stroke-width="1.1" fill="none"/><rect x="382.3" y="197.8" width="4.5" height="1.2" fill="#f8e090"/><rect x="319" y="184.5" width="5.5" height="6" fill="#e02828" stroke="#8a1010" stroke-width="0.6"/><rect x="319" y="193" width="5.5" height="6" fill="#38d038" stroke="#1a7a1a" stroke-width="0.6"/><circle cx="392.5" cy="187.7" r="1.9" fill="#fff" stroke="#c07050" stroke-width="0.8"/><circle cx="392.5" cy="196" r="1.9" fill="#fff" stroke="#c07050" stroke-width="0.8"/><rect x="513.3" y="144.1" width="90" height="270" rx="3" fill="#8ccbf3" stroke="#3f5f82" stroke-width="1"/><path d="M513.3 155.3 V147.1 a3 3 0 0 1 3 -3 H603 V155.3 z" fill="url(#sal)" stroke="#7a6a66" stroke-width="0.8"/><path d="M513.5 155.6 H600" stroke="#4a5a70" stroke-width="1.2"/><circle cx="519" cy="150" r="3.6" fill="#48a8b0" stroke="#2a7a80" stroke-width="0.6"/><path d="M517.5 150 l1.5 -1.5 l1.5 1.5" stroke="#e0f8f8" stroke-width="0.8" fill="none"/><rect x="513.3" y="191.40" width="80" height="1.7" fill="#3f5f80"/><rect x="513.3" y="208.70" width="80" height="1.7" fill="#3f5f80"/><rect x="513.3" y="226.10" width="80" height="1.7" fill="#3f5f80"/><rect x="513.3" y="252.35" width="80" height="1.7" fill="#3f5f80"/><rect x="513.3" y="278.60" width="80" height="1.7" fill="#3f5f80"/><rect x="513.3" y="304.85" width="80" height="1.7" fill="#3f5f80"/><rect x="513.3" y="331.10" width="80" height="1.7" fill="#3f5f80"/><rect x="513.3" y="357.35" width="80" height="1.7" fill="#3f5f80"/><rect x="513.3" y="383.60" width="80" height="1.7" fill="#3f5f80"/><rect x="511" y="167.60" width="5.8" height="5.8" fill="#38d038" stroke="#1a7a1a" stroke-width="0.6"/><rect x="518" y="167.5" width="4.5" height="6" fill="#f0f0f0" stroke="#909090" stroke-width="0.5"/><rect x="511" y="201.60" width="5.8" height="5.8" fill="#38d038" stroke="#1a7a1a" stroke-width="0.6"/><rect x="511" y="219.10" width="5.8" height="5.8" fill="#38d038" stroke="#1a7a1a" stroke-width="0.6"/><circle cx="520.5" cy="203.0" r="2" fill="#e8e0d8" stroke="#a09080" stroke-width="0.5"/><path d="M519 206.5 l1.5 -2 l1.5 2" stroke="#a09080" stroke-width="0.6" fill="none"/><circle cx="520.5" cy="220.5" r="2" fill="#e8e0d8" stroke="#a09080" stroke-width="0.5"/><path d="M519 224 l1.5 -2 l1.5 2" stroke="#a09080" stroke-width="0.6" fill="none"/><rect x="548.5" y="228.90" width="7.5" height="7" fill="#f08060"/><rect x="548.5" y="232.40" width="3.5" height="3.5" fill="#c8d840"/><rect x="511" y="237.40" width="5.8" height="5.8" fill="#38d038" stroke="#1a7a1a" stroke-width="0.6"/><path d="M518.3 243.3 v-3 l1.2 -2.6 l1.2 2 q1 -1.6 2 -0.8 q1 0.6 1.5 2.4 v2 z" fill="#f2b248"/><path d="M518.3 241.10000000000002 l1.2 -3.4 l1.3 2.4 q1 -1.6 2 -0.8 q0.9 0.6 1.5 2.4" stroke="#b02a14" stroke-width="1.1" fill="none"/><rect x="519" y="242.10000000000002" width="4.5" height="1.2" fill="#f8e090"/><circle cx="513.8" cy="248.20" r="1.8" fill="#fff" stroke="#3a4a60" stroke-width="0.8"/><rect x="517.5" y="244.90" width="6.5" height="6.5" rx="1.5" fill="#f07a6a"/><rect x="548.5" y="255.15" width="7.5" height="7" fill="#f08060"/><rect x="548.5" y="258.65" width="3.5" height="3.5" fill="#c8d840"/><rect x="511" y="263.65" width="5.8" height="5.8" fill="#38d038" stroke="#1a7a1a" stroke-width="0.6"/><path d="M518.3 269.55 v-3 l1.2 -2.6 l1.2 2 q1 -1.6 2 -0.8 q1 0.6 1.5 2.4 v2 z" fill="#f2b248"/><path d="M518.3 267.35 l1.2 -3.4 l1.3 2.4 q1 -1.6 2 -0.8 q0.9 0.6 1.5 2.4" stroke="#b02a14" stroke-width="1.1" fill="none"/><rect x="519" y="268.35" width="4.5" height="1.2" fill="#f8e090"/><circle cx="513.8" cy="274.45" r="1.8" fill="#fff" stroke="#3a4a60" stroke-width="0.8"/><rect x="517.5" y="271.15" width="6.5" height="6.5" rx="1.5" fill="#f07a6a"/><rect x="548.5" y="281.40" width="7.5" height="7" fill="#f08060"/><rect x="548.5" y="284.90" width="3.5" height="3.5" fill="#c8d840"/><rect x="511" y="289.90" width="5.8" height="5.8" fill="#38d038" stroke="#1a7a1a" stroke-width="0.6"/><path d="M518.3 295.79999999999995 v-3 l1.2 -2.6 l1.2 2 q1 -1.6 2 -0.8 q1 0.6 1.5 2.4 v2 z" fill="#f2b248"/><path d="M518.3 293.59999999999997 l1.2 -3.4 l1.3 2.4 q1 -1.6 2 -0.8 q0.9 0.6 1.5 2.4" stroke="#b02a14" stroke-width="1.1" fill="none"/><rect x="519" y="294.59999999999997" width="4.5" height="1.2" fill="#f8e090"/><circle cx="513.8" cy="300.70" r="1.8" fill="#fff" stroke="#3a4a60" stroke-width="0.8"/><rect x="517.5" y="297.40" width="6.5" height="6.5" rx="1.5" fill="#f07a6a"/><rect x="548.5" y="307.65" width="7.5" height="7" fill="#f08060"/><rect x="548.5" y="311.15" width="3.5" height="3.5" fill="#c8d840"/><rect x="511" y="316.15" width="5.8" height="5.8" fill="#38d038" stroke="#1a7a1a" stroke-width="0.6"/><path d="M518.3 322.04999999999995 v-3 l1.2 -2.6 l1.2 2 q1 -1.6 2 -0.8 q1 0.6 1.5 2.4 v2 z" fill="#f2b248"/><path d="M518.3 319.84999999999997 l1.2 -3.4 l1.3 2.4 q1 -1.6 2 -0.8 q0.9 0.6 1.5 2.4" stroke="#b02a14" stroke-width="1.1" fill="none"/><rect x="519" y="320.84999999999997" width="4.5" height="1.2" fill="#f8e090"/><circle cx="513.8" cy="326.95" r="1.8" fill="#fff" stroke="#3a4a60" stroke-width="0.8"/><rect x="517.5" y="323.65" width="6.5" height="6.5" rx="1.5" fill="#f07a6a"/><rect x="548.5" y="333.90" width="7.5" height="7" fill="#f08060"/><rect x="548.5" y="337.40" width="3.5" height="3.5" fill="#c8d840"/><rect x="511" y="342.40" width="5.8" height="5.8" fill="#38d038" stroke="#1a7a1a" stroke-width="0.6"/><path d="M518.3 348.29999999999995 v-3 l1.2 -2.6 l1.2 2 q1 -1.6 2 -0.8 q1 0.6 1.5 2.4 v2 z" fill="#f2b248"/><path d="M518.3 346.09999999999997 l1.2 -3.4 l1.3 2.4 q1 -1.6 2 -0.8 q0.9 0.6 1.5 2.4" stroke="#b02a14" stroke-width="1.1" fill="none"/><rect x="519" y="347.09999999999997" width="4.5" height="1.2" fill="#f8e090"/><circle cx="513.8" cy="353.20" r="1.8" fill="#fff" stroke="#3a4a60" stroke-width="0.8"/><rect x="517.5" y="349.90" width="6.5" height="6.5" rx="1.5" fill="#f07a6a"/><rect x="548.5" y="360.15" width="7.5" height="7" fill="#f08060"/><rect x="548.5" y="363.65" width="3.5" height="3.5" fill="#c8d840"/><rect x="511" y="368.65" width="5.8" height="5.8" fill="#38d038" stroke="#1a7a1a" stroke-width="0.6"/><path d="M518.3 374.54999999999995 v-3 l1.2 -2.6 l1.2 2 q1 -1.6 2 -0.8 q1 0.6 1.5 2.4 v2 z" fill="#f2b248"/><path d="M518.3 372.34999999999997 l1.2 -3.4 l1.3 2.4 q1 -1.6 2 -0.8 q0.9 0.6 1.5 2.4" stroke="#b02a14" stroke-width="1.1" fill="none"/><rect x="519" y="373.34999999999997" width="4.5" height="1.2" fill="#f8e090"/><circle cx="513.8" cy="379.45" r="1.8" fill="#fff" stroke="#3a4a60" stroke-width="0.8"/><rect x="517.5" y="376.15" width="6.5" height="6.5" rx="1.5" fill="#f07a6a"/><rect x="548.5" y="386.40" width="7.5" height="7" fill="#f08060"/><rect x="548.5" y="389.90" width="3.5" height="3.5" fill="#c8d840"/><rect x="511" y="394.90" width="5.8" height="5.8" fill="#38d038" stroke="#1a7a1a" stroke-width="0.6"/><path d="M518.3 400.79999999999995 v-3 l1.2 -2.6 l1.2 2 q1 -1.6 2 -0.8 q1 0.6 1.5 2.4 v2 z" fill="#f2b248"/><path d="M518.3 398.59999999999997 l1.2 -3.4 l1.3 2.4 q1 -1.6 2 -0.8 q0.9 0.6 1.5 2.4" stroke="#b02a14" stroke-width="1.1" fill="none"/><rect x="519" y="399.59999999999997" width="4.5" height="1.2" fill="#f8e090"/><circle cx="513.8" cy="405.70" r="1.8" fill="#fff" stroke="#3a4a60" stroke-width="0.8"/><rect x="517.5" y="402.40" width="6.5" height="6.5" rx="1.5" fill="#f07a6a"/></svg>
<div class="t" style="left:186px;top:132.7px;transform:translateY(-50%) scaleX(0.91);transform-origin:0 50%;font-size:6.55px;color:#5a1a10;font-weight:bold">WiiNunchuck1</div>
<div class="t" style="left:184.8px;top:144.3px;transform:translateY(-50%) scaleX(0.91);transform-origin:0 50%;font-size:6.93px;color:#1a2a50;">Clock</div>
<div class="t" style="left:212px;top:144.6px;transform:translateY(-50%) scaleX(0.91);transform-origin:0 50%;font-size:6.60px;color:#1a2a50;">Angle</div>
<div class="t" style="right:524.7px;top:152.6px;transform:translateY(-50%) scaleX(0.91);transform-origin:100% 50%;font-size:7.04px;color:#1a2a50;">X</div>
<div class="t" style="right:524.7px;top:161px;transform:translateY(-50%) scaleX(0.91);transform-origin:100% 50%;font-size:7.04px;color:#1a2a50;">Y</div>
<div class="t" style="right:524.7px;top:169.6px;transform:translateY(-50%) scaleX(0.91);transform-origin:100% 50%;font-size:7.04px;color:#1a2a50;">Z</div>
<div class="t" style="right:524.7px;top:187.6px;transform:translateY(-50%) scaleX(0.91);transform-origin:100% 50%;font-size:7.04px;color:#1a2a50;">X</div>
<div class="t" style="right:524.7px;top:196px;transform:translateY(-50%) scaleX(0.91);transform-origin:100% 50%;font-size:7.04px;color:#1a2a50;">Y</div>
<div class="t" style="right:524.7px;top:213.5px;transform:translateY(-50%) scaleX(0.91);transform-origin:100% 50%;font-size:7.04px;color:#1a2a50;">C</div>
<div class="t" style="right:524.7px;top:222px;transform:translateY(-50%) scaleX(0.91);transform-origin:100% 50%;font-size:7.04px;color:#1a2a50;">Z</div>
<div class="t" style="left:212px;top:179.6px;transform:translateY(-50%) scaleX(0.91);transform-origin:0 50%;font-size:6.60px;color:#1a2a50;">Stick</div>
<div class="t" style="left:212px;top:205.6px;transform:translateY(-50%) scaleX(0.91);transform-origin:0 50%;font-size:6.60px;color:#1a2a50;">Button</div>
<div class="t" style="right:524px;top:230.8px;transform:translateY(-50%) scaleX(0.91);transform-origin:100% 50%;font-size:6.82px;color:#1a2a50;">Out</div>
<div class="t" style="left:264.8px;top:203px;transform:translateY(-50%) scaleX(0.91);transform-origin:0 50%;font-size:6.60px;color:#5a1a10;font-weight:bold">MapRange1</div>
<div class="t" style="left:263.5px;top:214.2px;transform:translateY(-50%) scaleX(0.91);transform-origin:0 50%;font-size:6.93px;color:#1a2a50;">In</div>
<div class="t" style="right:454.5px;top:214.2px;transform:translateY(-50%) scaleX(0.91);transform-origin:100% 50%;font-size:6.93px;color:#1a2a50;">Out</div>
<div class="t" style="left:334.8px;top:167.8px;transform:translateY(-50%) scaleX(0.91);transform-origin:0 50%;font-size:6.71px;color:#1a2a50;font-weight:bold">Steering1</div>
<div class="t" style="left:324.5px;top:179.7px;transform:translateY(-50%) scaleX(0.91);transform-origin:0 50%;font-size:6.71px;color:#2a1a10;">Steering</div>
<div class="t" style="left:334px;top:187.9px;transform:translateY(-50%) scaleX(0.91);transform-origin:0 50%;font-size:6.71px;color:#2a1a10;">Direction</div>
<div class="t" style="left:334px;top:196.2px;transform:translateY(-50%) scaleX(0.91);transform-origin:0 50%;font-size:6.71px;color:#2a1a10;">Speed</div>
<div class="t" style="left:365px;top:179.7px;transform:translateY(-50%) scaleX(0.91);transform-origin:0 50%;font-size:6.71px;color:#2a1a10;">Motors</div>
<div class="t" style="right:367.5px;top:187.9px;transform:translateY(-50%) scaleX(0.91);transform-origin:100% 50%;font-size:6.71px;color:#2a1a10;">Left</div>
<div class="t" style="right:367.5px;top:196.2px;transform:translateY(-50%) scaleX(0.91);transform-origin:100% 50%;font-size:6.71px;color:#2a1a10;">Right</div>
<div class="t" style="left:527px;top:150.2px;transform:translateY(-50%) scaleX(0.91);transform-origin:0 50%;font-size:6.71px;color:#5a1a10;font-weight:bold">NodeMCU ESP-12</div>
<div class="t" style="left:518px;top:162.2px;transform:translateY(-50%) scaleX(0.91);transform-origin:0 50%;font-size:6.66px;color:#1a2a50;">Modules.WiFi.Sockets.UDP</div>
<div class="t" style="left:525px;top:170.7px;transform:translateY(-50%) scaleX(0.91);transform-origin:0 50%;font-size:6.82px;color:#1a2a50;">In</div>
<div class="t" style="left:582px;top:179.2px;transform:translateY(-50%) scaleX(0.91);transform-origin:0 50%;font-size:6.71px;color:#1a2a50;">RemoteIP</div>
<div class="t" style="left:574px;top:187.7px;transform:translateY(-50%) scaleX(0.91);transform-origin:0 50%;font-size:6.71px;color:#1a2a50;">RemotePort</div>
<div class="t" style="left:555px;top:196.8px;transform:translateY(-50%) scaleX(0.91);transform-origin:0 50%;font-size:6.60px;color:#1a2a50;">Serial[0]</div>
<div class="t" style="left:526px;top:204.7px;transform:translateY(-50%) scaleX(0.91);transform-origin:0 50%;font-size:6.82px;color:#1a2a50;">In</div>
<div class="t" style="left:555px;top:214.2px;transform:translateY(-50%) scaleX(0.91);transform-origin:0 50%;font-size:6.60px;color:#1a2a50;">Serial[1]</div>
<div class="t" style="left:526px;top:222.2px;transform:translateY(-50%) scaleX(0.91);transform-origin:0 50%;font-size:6.82px;color:#1a2a50;">In</div>
<div class="t" style="left:557px;top:231.70000000000002px;transform:translateY(-50%) scaleX(0.91);transform-origin:0 50%;font-size:6.60px;color:#1a2a50;">Digital[ 0 ]</div>
<div class="t" style="left:525px;top:240.4px;transform:translateY(-50%) scaleX(0.91);transform-origin:0 50%;font-size:6.82px;color:#1a2a50;">Analog</div>
<div class="t" style="left:525px;top:248.4px;transform:translateY(-50%) scaleX(0.91);transform-origin:0 50%;font-size:6.82px;color:#1a2a50;">Digital</div>
<div class="t" style="left:557px;top:257.95px;transform:translateY(-50%) scaleX(0.91);transform-origin:0 50%;font-size:6.60px;color:#1a2a50;">Digital[ 1 ]</div>
<div class="t" style="left:525px;top:266.65px;transform:translateY(-50%) scaleX(0.91);transform-origin:0 50%;font-size:6.82px;color:#1a2a50;">Analog</div>
<div class="t" style="left:525px;top:274.65px;transform:translateY(-50%) scaleX(0.91);transform-origin:0 50%;font-size:6.82px;color:#1a2a50;">Digital</div>
<div class="t" style="left:557px;top:284.2px;transform:translateY(-50%) scaleX(0.91);transform-origin:0 50%;font-size:6.60px;color:#1a2a50;">Digital[ 2 ]</div>
<div class="t" style="left:525px;top:292.9px;transform:translateY(-50%) scaleX(0.91);transform-origin:0 50%;font-size:6.82px;color:#1a2a50;">Analog</div>
<div class="t" style="left:525px;top:300.9px;transform:translateY(-50%) scaleX(0.91);transform-origin:0 50%;font-size:6.82px;color:#1a2a50;">Digital</div>
<div class="t" style="left:557px;top:310.45px;transform:translateY(-50%) scaleX(0.91);transform-origin:0 50%;font-size:6.60px;color:#1a2a50;">Digital[ 3 ]</div>
<div class="t" style="left:525px;top:319.15px;transform:translateY(-50%) scaleX(0.91);transform-origin:0 50%;font-size:6.82px;color:#1a2a50;">Analog</div>
<div class="t" style="left:525px;top:327.15px;transform:translateY(-50%) scaleX(0.91);transform-origin:0 50%;font-size:6.82px;color:#1a2a50;">Digital</div>
<div class="t" style="left:557px;top:336.7px;transform:translateY(-50%) scaleX(0.91);transform-origin:0 50%;font-size:6.60px;color:#1a2a50;">Digital[ 4 ]</div>
<div class="t" style="left:525px;top:345.4px;transform:translateY(-50%) scaleX(0.91);transform-origin:0 50%;font-size:6.82px;color:#1a2a50;">Analog</div>
<div class="t" style="left:525px;top:353.4px;transform:translateY(-50%) scaleX(0.91);transform-origin:0 50%;font-size:6.82px;color:#1a2a50;">Digital</div>
<div class="t" style="left:557px;top:362.95px;transform:translateY(-50%) scaleX(0.91);transform-origin:0 50%;font-size:6.60px;color:#1a2a50;">Digital[ 5 ]</div>
<div class="t" style="left:525px;top:371.65px;transform:translateY(-50%) scaleX(0.91);transform-origin:0 50%;font-size:6.82px;color:#1a2a50;">Analog</div>
<div class="t" style="left:525px;top:379.65px;transform:translateY(-50%) scaleX(0.91);transform-origin:0 50%;font-size:6.82px;color:#1a2a50;">Digital</div>
<div class="t" style="left:557px;top:389.2px;transform:translateY(-50%) scaleX(0.91);transform-origin:0 50%;font-size:6.60px;color:#1a2a50;">Digital[ 6 ]</div>
<div class="t" style="left:525px;top:397.9px;transform:translateY(-50%) scaleX(0.91);transform-origin:0 50%;font-size:6.82px;color:#1a2a50;">Analog</div>
<div class="t" style="left:525px;top:405.9px;transform:translateY(-50%) scaleX(0.91);transform-origin:0 50%;font-size:6.82px;color:#1a2a50;">Digital</div>
</div>
<div class="a" style="left:144.5px;top:408px;width:454px;height:13.5px;background:#f0f0f0"></div>
<div class="a" style="left:589px;top:400px;width:9.5px;height:8.5px;background:#f0f0f0"></div>
<div class="a" style="left:184.3px;top:409.5px;width:0.8px;height:11px;background:#e8e8e8"></div>
<div class="t" style="left:147px;top:415.6px;transform:translateY(-50%) scaleX(0.91);transform-origin:0 50%;font-size:6.60px;color:#333;">528:369</div>
<div class="t" style="left:186.6px;top:415.6px;transform:translateY(-50%) scaleX(0.91);transform-origin:0 50%;font-size:6.82px;color:#222;">Steering1.__OpenWireRootUnit__.Steering1.SteeringInputPins._Pin0 528:368</div>
<div class="a" style="left:144.5px;top:421.5px;width:454px;height:28px;background:#fcefe4"></div>
<div class="t" style="left:152px;top:430px;transform:translateY(-50%) scaleX(0.91);transform-origin:0 50%;font-size:6.60px;color:#333;">Port:</div>
<div class="a" style="left:168.2px;top:424px;width:48.4px;height:11.6px;background:#e6e6e6;border:1px solid #c4c4c4"></div>
<div class="t" style="left:170.5px;top:430px;transform:translateY(-50%) scaleX(0.91);transform-origin:0 50%;font-size:6.60px;color:#222;width:40px;overflow:hidden">COM3 (Unavai</div>
<div class="t" style="left:219.6px;top:430px;transform:translateY(-50%) scaleX(0.91);transform-origin:0 50%;font-size:6.60px;color:#333;">Speed:</div>
<div class="a" style="left:241.6px;top:424px;width:39.6px;height:11.6px;background:#fff;border:1px solid #c4c4c4"></div>
<div class="t" style="left:244px;top:430px;transform:translateY(-50%) scaleX(0.91);transform-origin:0 50%;font-size:6.60px;color:#222;">9600</div>
<div class="t" style="left:284.8px;top:430px;transform:translateY(-50%) scaleX(0.91);transform-origin:0 50%;font-size:6.60px;color:#333;"><u>F</u>ormat:</div>
<div class="a" style="left:308.9px;top:425px;width:96.7px;height:11px;background:#e6e6e6;border:1px solid #c4c4c4"></div>
<div class="t" style="left:311.5px;top:430.5px;transform:translateY(-50%) scaleX(0.91);transform-origin:0 50%;font-size:6.71px;color:#222;">Unformatted Text</div>
<div class="a" style="left:409.5px;top:424.5px;width:47.4px;height:12px;background:#ececec;border:1px solid #d0d0d0"></div>
<div class="t" style="left:426px;top:430.5px;transform:translateY(-50%) scaleX(0.91);transform-origin:0 50%;font-size:6.71px;color:#222;">Connect</div>
<svg width="748" height="531">
<path d="M210 428.5l2 2l2-2M276 428.5l2 2l2-2M399.5 429l2 2l2-2" stroke="#333" stroke-width="0.9" fill="none"/>
<rect x="416" y="427.5" width="7" height="6" fill="#f4f4f4" stroke="#707070" stroke-width="0.7"/><path d="M418 432 l4 -5" stroke="#606060" stroke-width="1"/>
<path d="M588 433 l3 -3" stroke="#2a6aa0" stroke-width="1.6"/><path d="M591 430 l3 -3.5" stroke="#a0a0a0" stroke-width="0.9"/><path d="M588 426.5 l6.5 6.5" stroke="#c84848" stroke-width="1.2"/>
</svg>
<div class="a" style="left:188px;top:440px;width:32.5px;height:9px;background:#dde6f0;border:1px solid #c8d0dc;border-bottom:none"></div>
<div class="a" style="left:146.4px;top:438.6px;width:41.6px;height:11px;background:#fff;border:1px solid #cfcfcf;border-bottom:none"></div>
<div class="t" style="left:162.5px;top:444.3px;transform:translateY(-50%) scaleX(0.91);transform-origin:0 50%;font-size:6.71px;color:#222;">Terminal</div>
<div class="t" style="left:202px;top:445.3px;transform:translateY(-50%) scaleX(0.91);transform-origin:0 50%;font-size:6.71px;color:#222;">Scope</div>
<svg width="748" height="531">
<rect x="151" y="440.8" width="7" height="6" fill="#2f4a2a" stroke="#1a2a18" stroke-width="0.5"/><path d="M152 445.5 l2 -2 l2 1.5 l1.5 -3" stroke="#80d070" stroke-width="0.7" fill="none"/>
<rect x="191.3" y="441.3" width="7.5" height="6" fill="#5a90d0" stroke="#2a4a80" stroke-width="0.5"/><path d="M192.3 445.5 h5.5" stroke="#d0e8ff" stroke-width="0.6"/>
</svg>
<div class="a" style="left:146px;top:449px;width:452px;height:76.5px;background:#fcfcfc;border-left:1px solid #d6d6d6"></div>
<div class="a" style="left:152.5px;top:458.7px;width:6.3px;height:6.3px;background:#fff;border:1px solid #555"></div>
<div class="t" style="left:160.5px;top:462px;transform:translateY(-50%) scaleX(0.91);transform-origin:0 50%;font-size:6.71px;color:#222;">Auto Scroll</div>
<div class="a" style="left:196.5px;top:458.7px;width:6.3px;height:6.3px;background:#fff;border:1px solid #777"></div>
<div class="t" style="left:204px;top:462px;transform:translateY(-50%) scaleX(0.91);transform-origin:0 50%;font-size:6.71px;color:#222;">Hold</div>
<div class="a" style="left:545.2px;top:453.6px;width:48px;height:12.1px;background:#e8e8e8;border:1px solid #c8c8c8"></div>
<div class="t" style="left:567.5px;top:459.8px;transform:translateY(-50%) scaleX(0.91);transform-origin:0 50%;font-size:6.82px;color:#222;">Clear</div>
<div class="a" style="left:148.4px;top:469px;width:448px;height:35.3px;background:#fff;border:1px solid #b8b8b8"></div>
<div class="a" style="left:152px;top:509px;width:353.7px;height:12px;background:#fff;border:1px solid #d8d8d8"></div>
<div class="a" style="left:509.2px;top:515px;width:0px;height:0px;"></div>
<div class="a" style="left:509.2px;top:510.5px;width:6.4px;height:6.4px;background:#fff;border:1px solid #555"></div>
<div class="t" style="left:517.8px;top:514.5px;transform:translateY(-50%) scaleX(0.91);transform-origin:0 50%;font-size:6.60px;color:#222;">Auto Clear</div>
<div class="a" style="left:553px;top:508.6px;width:40px;height:12.2px;background:#e8e8e8;border:1px solid #d4d4d4"></div>
<div class="t" style="left:571.5px;top:514.7px;transform:translateY(-50%) scaleX(0.91);transform-origin:0 50%;font-size:6.82px;color:#222;">Send</div>
<svg width="748" height="531">
<path d="M153.8 461.5 l1.5 2 l3 -4" stroke="#111" stroke-width="1" fill="none"/>
<path d="M510.5 513.5 l1.5 2 l3 -4" stroke="#111" stroke-width="1" fill="none"/>
<path d="M557.5 455.5 l2.5 4" stroke="#b08020" stroke-width="1"/><path d="M557.5 463.5 q2 -4 5.5 -3.5 l1.5 3.5 z" fill="#f0c030"/>
<path d="M588.5 474.5l2 -2l2 2M588.5 498.5l2 2l2 -2" stroke="#a0a0a0" stroke-width="0.7" fill="none"/>
<rect x="561.5" y="511.5" width="8" height="6" fill="#e0e0e0" stroke="#808080" stroke-width="0.6"/><path d="M563 514 h5 M563 516 h5" stroke="#606060" stroke-width="0.6"/>
</svg>
<div class="a" style="left:597.5px;top:41px;width:146px;height:472px;background:#f0f0f0;border-left:1px solid #e2e2e2"></div>
<div class="a" style="left:597.5px;top:512.5px;width:146px;height:13.5px;background:#fcefe4;border-left:1px solid #e8e0d8"></div>
<div class="a" style="left:602.8px;top:44px;width:61px;height:10.6px;background:#fff;border:1px solid #cfcfcf"></div>
<div class="t" style="left:604.5px;top:49.5px;transform:translateY(-50%) scaleX(0.91);transform-origin:0 50%;font-size:6.82px;color:#222;">steer</div>
<div class="a" style="left:677.5px;top:44px;width:11px;height:11px;background:#bcd4f0;border:1px solid #8ab0dc"></div>
<svg width="748" height="531"><defs>
<linearGradient id="hd" x1="0" y1="0" x2="0" y2="1"><stop offset="0" stop-color="#9a9a9a"/><stop offset="1" stop-color="#5e5e5e"/></linearGradient>
<linearGradient id="gh" x1="0" y1="0" x2="0" y2="1"><stop offset="0" stop-color="#b8f4b0"/><stop offset="1" stop-color="#78dc74"/></linearGradient>
<linearGradient id="ic" x1="0" y1="0" x2="0" y2="1"><stop offset="0" stop-color="#b4b4b4"/><stop offset="1" stop-color="#8a8a8a"/></linearGradient><linearGradient id="sph" x1="0.2" y1="0" x2="0.6" y2="1"><stop offset="0" stop-color="#c8c8c8"/><stop offset="0.4" stop-color="#808080"/><stop offset="0.75" stop-color="#111"/></linearGradient>
</defs>
<rect x="603.3" y="58.8" width="67" height="68" rx="3" fill="#fff" stroke="#2e2e2e" stroke-width="1.3"/>
<path d="M603.3 69.5 V61.8 a3 3 0 0 1 3 -3 H667.3 a3 3 0 0 1 3 3 V69.5 z" fill="url(#hd)"/>
<rect x="609.2" y="75.5" width="43.6" height="44" rx="2.5" fill="#fff" stroke="#54b854" stroke-width="1.1"/>
<path d="M609.2 87.2 V78 a2.5 2.5 0 0 1 2.5 -2.5 H650.3 a2.5 2.5 0 0 1 2.5 2.5 V87.2 z" fill="url(#gh)" stroke="#54b854" stroke-width="1"/>
<rect x="615.2" y="92" width="20.3" height="20.5" rx="1.5" fill="url(#ic)" stroke="#3a3a3a" stroke-width="0.9"/><circle cx="624.5" cy="101.8" r="6.3" fill="url(#sph)"/><path d="M620.0 100.3 q2 -2 4 -0.8 l2 1.2 l-2 1.5 l-1 -1 z" fill="#f4f4f4"/><path d="M623.0 102.8 l1 2.5" stroke="#f0f0f0" stroke-width="1.1"/><path d="M625.5 98.3 l2 1" stroke="#e0e0e0" stroke-width="0.8"/><path d="M625.0 103.3 h4.5 v-2.3 l3.5 3.5 l-3.5 3.5 v-2.3 h-4.5 z" fill="#111"/>
<rect x="675.5" y="58.8" width="44" height="43.6" rx="3" fill="#fff" stroke="#2e2e2e" stroke-width="1.3"/>
<path d="M675.5 69.5 V61.8 a3 3 0 0 1 3 -3 H716.5 a3 3 0 0 1 3 3 V69.5 z" fill="url(#hd)"/>
<rect x="681" y="75" width="20.3" height="20.5" rx="1.5" fill="url(#ic)" stroke="#3a3a3a" stroke-width="0.9"/><circle cx="690.3" cy="84.8" r="6.3" fill="url(#sph)"/><path d="M685.8 83.3 q2 -2 4 -0.8 l2 1.2 l-2 1.5 l-1 -1 z" fill="#f4f4f4"/><path d="M688.8 85.8 l1 2.5" stroke="#f0f0f0" stroke-width="1.1"/><path d="M691.3 81.3 l2 1" stroke="#e0e0e0" stroke-width="0.8"/><path d="M690.8 86.3 h4.5 v-2.3 l3.5 3.5 l-3.5 3.5 v-2.3 h-4.5 z" fill="#111"/>
<path d="M606 67.5 l2 -4 l2 2.5 l2 -2 v3.5z" fill="#e05030"/><path d="M606 68 h6" stroke="#70b040" stroke-width="1"/>
<path d="M612 84 l2 -4 l2 2.5 l2 -2 v3.5z" fill="#e05030"/><path d="M612 84.5 h6" stroke="#f0c040" stroke-width="1"/>
<path d="M678 67.5 l2 -4 l2 2.5 l2 -2 v3.5z" fill="#e05030"/><path d="M678 68 h6" stroke="#f0c040" stroke-width="1"/>
<!-- toolbar icons -->
<path d="M667.5 46 l7 7 M674.5 46 l-7 7" stroke="#d84848" stroke-width="1.3"/><path d="M668 47.5 l6 6" stroke="#808080" stroke-width="0.5" opacity="0.6"/>
<path d="M679.5 53 h7.5 l-1.5 -1.8 h-4.5 z" fill="#3a4aa0"/><path d="M682 51.2 l1.5 -5.5 l1.8 5.5 z" fill="#3a4aa0"/>
<path d="M689.2 48.5 h2.6 l-1.3 1.6 z" fill="#222"/>
<path d="M694.3 46.5 h3.2 l1 1 h4.2 v5 h-8.4 z" fill="#f4dc88" stroke="#c8a848" stroke-width="0.5"/><rect x="697" y="48" width="3.5" height="4" fill="#fff8e0" stroke="#c0a050" stroke-width="0.4"/>
<path d="M706.3 46.5 h3.2 l1 1 h4.2 v5 h-8.4 z" fill="#f4dc88" stroke="#c8a848" stroke-width="0.5"/><circle cx="711" cy="50.5" r="2.3" fill="#40a8d8"/><path d="M710 50.5 h2 M711 49.5 v2" stroke="#fff" stroke-width="0.6"/>
<path d="M718.3 46.5 h3.2 l1 1 h4.2 v5 h-8.4 z" fill="#f4dc88" stroke="#c8a848" stroke-width="0.5"/><circle cx="723" cy="50.5" r="2.3" fill="#40a8d8"/><path d="M722 50.5 h2" stroke="#fff" stroke-width="0.6"/>
<path d="M731.5 53.5 l4 -4" stroke="#2a6aa0" stroke-width="1.6"/><path d="M735.5 49.5 l3.5 -3.5" stroke="#a8a8a8" stroke-width="1"/><path d="M731.5 46 l8 7.5" stroke="#c84848" stroke-width="1.3"/>
<!-- ads icons -->
<path d="M721 523.5 l8 -8" stroke="#c03030" stroke-width="1.4"/><path d="M721 516 l8 7.5" stroke="#3a6ab0" stroke-width="1.4"/>
<rect x="732.7" y="514.5" width="8.7" height="9.5" rx="1.5" fill="#d8404a"/><circle cx="737" cy="519" r="2.5" fill="none" stroke="#fff" stroke-width="0.8"/>
</svg>
<div class="t" style="left:616px;top:64.3px;transform:translateY(-50%) scaleX(0.91);transform-origin:0 50%;font-size:6.55px;color:#f0f0f0;">Converters</div>
<div class="t" style="left:622px;top:81.3px;transform:translateY(-50%) scaleX(0.91);transform-origin:0 50%;font-size:6.60px;color:#f8fff8;text-shadow:0 0 1px #5a5">Analog</div>
<div class="t" style="left:688px;top:64.3px;transform:translateY(-50%) scaleX(0.91);transform-origin:0 50%;font-size:6.55px;color:#f0f0f0;">Analog</div>
<div class="t" style="left:649.7px;top:519.7px;transform:translateY(-50%) scaleX(0.91);transform-origin:0 50%;font-size:6.82px;color:#1a1a1a;font-weight:bold">Arduino eBay Ads:</div>
<div class="a" style="left:0px;top:525.5px;width:748px;height:5.5px;background:linear-gradient(#c9ced8,#b2c8de 55%,#90abc6)"></div>
</div></body></html>
